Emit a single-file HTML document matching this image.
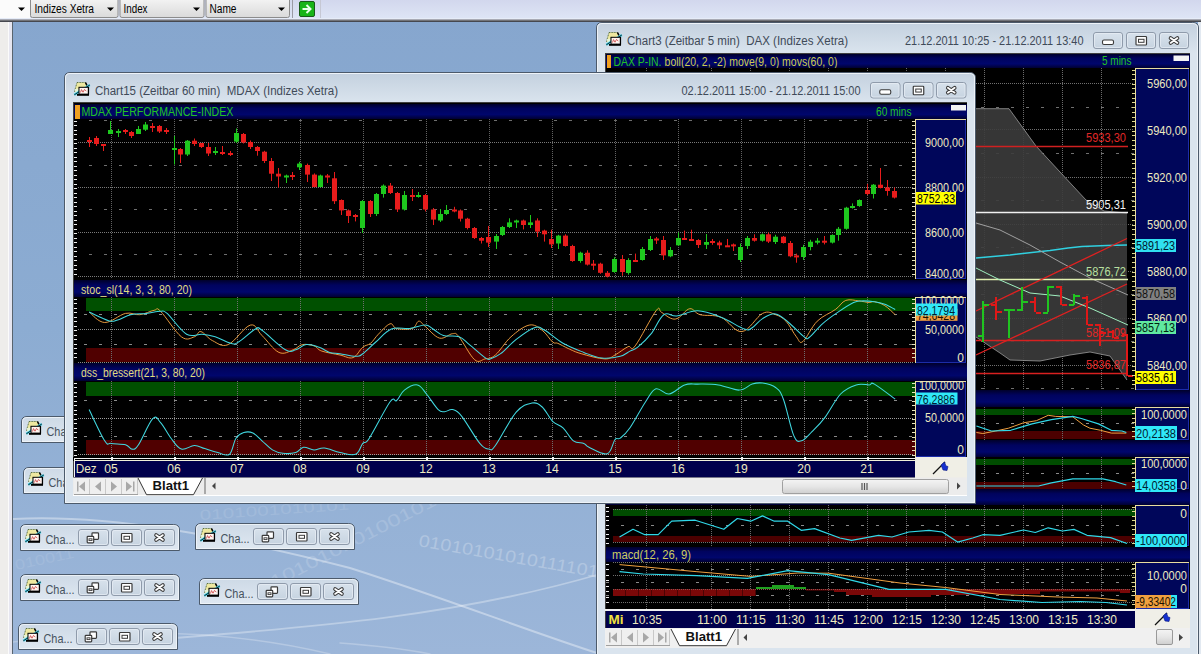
<!DOCTYPE html>
<html><head><meta charset="utf-8"><title>Chart</title>
<style>
html,body{margin:0;padding:0;width:1201px;height:654px;overflow:hidden;background:#8aa9cf;font-family:"Liberation Sans",sans-serif;}
svg text{font-family:"Liberation Sans",sans-serif;}
</style></head><body>
<svg width="1201" height="654" viewBox="0 0 1201 654" style="position:absolute;left:0;top:0"><defs>
<linearGradient id="desk" x1="0" y1="0" x2="0" y2="1">
 <stop offset="0" stop-color="#86a6ce"/><stop offset="0.5" stop-color="#8cacd2"/><stop offset="1" stop-color="#9cb6d9"/>
</linearGradient>
<linearGradient id="frameg" x1="0" y1="0" x2="0" y2="1">
 <stop offset="0" stop-color="#c4d1df"/><stop offset="0.06" stop-color="#cdd9e6"/><stop offset="0.3" stop-color="#d9e3ee"/><stop offset="1" stop-color="#dde7f1"/>
</linearGradient>
<linearGradient id="minig" x1="0" y1="0" x2="0" y2="1">
 <stop offset="0" stop-color="#cdd9e6"/><stop offset="1" stop-color="#dfe8f1"/>
</linearGradient>
<linearGradient id="btng" x1="0" y1="0" x2="0" y2="1">
 <stop offset="0" stop-color="#d8e2ec"/><stop offset="1" stop-color="#c6d3e0"/>
</linearGradient>
<linearGradient id="combog" x1="0" y1="0" x2="0" y2="1">
 <stop offset="0" stop-color="#f6f6f6"/><stop offset="1" stop-color="#dadada"/>
</linearGradient>
<linearGradient id="tbg" x1="0" y1="0" x2="0" y2="1">
 <stop offset="0" stop-color="#d2d7ed"/><stop offset="1" stop-color="#dfe6f6"/>
</linearGradient>
<linearGradient id="navyg" x1="0" y1="0" x2="0" y2="1">
 <stop offset="0" stop-color="#00002a"/><stop offset="0.3" stop-color="#00035e"/><stop offset="0.7" stop-color="#00066c"/><stop offset="1" stop-color="#000032"/>
</linearGradient>
<linearGradient id="scrollg" x1="0" y1="0" x2="0" y2="1">
 <stop offset="0" stop-color="#f4f4f4"/><stop offset="0.5" stop-color="#e6e6e6"/><stop offset="1" stop-color="#cfcfcf"/>
</linearGradient>
</defs><rect x="0" y="0" width="1201" height="654" fill="url(#desk)" /><g fill="none" stroke="#ffffff" stroke-linecap="round"><path d="M13,519 C110,514 220,535 350,568 C450,600 520,628 600,654" stroke-width="2" opacity="0.38"/><path d="M150,640 C300,628 450,618 600,574" stroke-width="1.8" opacity="0.32"/><path d="M13,642 C120,628 230,630 330,654" stroke-width="1.5" opacity="0.25"/><path d="M340,643 C380,646 410,650 430,654" stroke-width="1.5" opacity="0.25"/></g><g font-family="Liberation Sans" fill="#ffffff"><text x="418" y="546" font-size="17" opacity="0.24" transform="rotate(10 418 546)" textLength="182" lengthAdjust="spacingAndGlyphs">01010101010111101</text><text x="262" y="594" font-size="17" opacity="0.15" transform="rotate(-27 262 594)" textLength="210" lengthAdjust="spacingAndGlyphs">0101010101001010</text><text x="200" y="520" font-size="14" opacity="0.1" transform="rotate(-4 200 520)" textLength="150" lengthAdjust="spacingAndGlyphs">0101001010101</text><text x="16" y="570" font-size="14" opacity="0.09" transform="rotate(-12 16 570)" textLength="60" lengthAdjust="spacingAndGlyphs">010011</text></g><rect x="0" y="0" width="1201" height="20" fill="url(#tbg)" /><rect x="0" y="0" width="30" height="20" fill="#fbfbfb" /><rect x="30.5" y="-3" width="87.5" height="20.5" rx="2" fill="url(#combog)" stroke="#8c8c8c" stroke-width="1"/><text xml:space="preserve" x="34.5" y="12.8" font-size="12" fill="#000" text-anchor="start" font-weight="normal" font-family="Liberation Sans" textLength="59.5" lengthAdjust="spacingAndGlyphs" >Indizes Xetra</text><rect x="120" y="-3" width="84" height="20.5" rx="2" fill="url(#combog)" stroke="#8c8c8c" stroke-width="1"/><text xml:space="preserve" x="123.5" y="12.8" font-size="12" fill="#000" text-anchor="start" font-weight="normal" font-family="Liberation Sans" textLength="24" lengthAdjust="spacingAndGlyphs" >Index</text><rect x="206" y="-3" width="83.5" height="20.5" rx="2" fill="url(#combog)" stroke="#8c8c8c" stroke-width="1"/><text xml:space="preserve" x="209.5" y="12.8" font-size="12" fill="#000" text-anchor="start" font-weight="normal" font-family="Liberation Sans" textLength="27" lengthAdjust="spacingAndGlyphs" >Name</text><path d="M18,7.5 L25,7.5 L21.5,11 Z" fill="#000"/><path d="M107,7.5 L114,7.5 L110.5,11 Z" fill="#000"/><path d="M193,7.5 L200,7.5 L196.5,11 Z" fill="#000"/><path d="M278,7.5 L285,7.5 L281.5,11 Z" fill="#000"/><line x1="292.5" y1="0" x2="292.5" y2="19" stroke="#9a9aa4" stroke-width="1" /><rect x="299.5" y="1.5" width="15" height="15" rx="1.5" fill="#18b418" stroke="#1a5a1a" stroke-width="1"/><path d="M302.5,9 L310,9 M306.5,5 L310.5,9 L306.5,13" fill="none" stroke="#eaffea" stroke-width="2"/><line x1="320.5" y1="0" x2="320.5" y2="19" stroke="#c6c8d4" stroke-width="1" /><rect x="0" y="18" width="1201" height="1" fill="#e6ecf8" /><rect x="0" y="19" width="1201" height="1" fill="#a9abb5" /><rect x="0" y="20" width="1201" height="1" fill="#727479" /><rect x="0" y="21" width="1201" height="1" fill="#46484f" /><rect x="0" y="22" width="12" height="632" fill="#eeedeb" /><rect x="8" y="22" width="1" height="632" fill="#fbfbfb" /><rect x="9" y="22" width="3" height="632" fill="#e6e6f0" /><rect x="12" y="22" width="1" height="632" fill="#58646e" /><path d="M21.5,442.5 L21.5,422 Q21.5,416.5 27,416.5 L174.5,416.5 Q180.5,416.5 180.5,422 L180.5,442.5 Z" fill="url(#minig)" stroke="#4c5a6b" stroke-width="1"/><path d="M22.5,441.5 L22.5,422 Q22.5,417.5 27,417.5 L174.5,417.5 Q179.5,417.5 179.5,422 L179.5,441.5 Z" fill="none" stroke="#f2f6fa" stroke-width="1" opacity="0.8"/><g transform="translate(26,421)"><path d="M3,0.5 L11.5,0.5 L13,3.5 L12.5,5.5 L5,5.5 L5,9 L0.5,9.5 Z" fill="#eee8a0" stroke="#3f5a2a" stroke-width="0.8" stroke-dasharray="1 0.6"/><path d="M11.5,0.5 L13,3.5" stroke="#000" stroke-width="1.6"/><path d="M1,7 L4.5,6.5 L4.5,11 L1.5,11.5 Z" fill="#e8f4d8"/><line x1="0.3" y1="12.8" x2="15.8" y2="3" stroke="#40d0e8" stroke-width="2.2"/><line x1="0.3" y1="12.8" x2="15.8" y2="3" stroke="#0a1a20" stroke-width="0.9"/><rect x="5" y="5.3" width="9.6" height="6.8" fill="#fff6f2" stroke="#000" stroke-width="1"/><rect x="13.8" y="5.5" width="1.2" height="7" fill="#000"/><rect x="3" y="12" width="12" height="1.8" fill="#000"/><path d="M6.5,10.5 L7.5,7.6 L9,10.2 L10.5,7.4 L12.3,9.2" fill="none" stroke="#d05050" stroke-width="0.9"/></g><text xml:space="preserve" x="46.5" y="435.5" font-size="12.5" fill="#46525e" text-anchor="start" font-weight="normal" font-family="Liberation Sans" textLength="29" lengthAdjust="spacingAndGlyphs" >Cha...</text><rect x="79.5" y="421.5" width="30" height="16" rx="2.5" fill="url(#btng)" stroke="#8f9bab" stroke-width="1"/><rect x="80.5" y="422.5" width="28" height="14" rx="2" fill="none" stroke="#e8eef5" stroke-width="1" opacity="0.7"/><rect x="93.0" y="424.8" width="6.5" height="6.5" rx="0.8" fill="#fff" stroke="#3a3a3a" stroke-width="1.2"/><rect x="88.2" y="428.3" width="6.5" height="6.5" rx="0.8" fill="#fff" stroke="#3a3a3a" stroke-width="1.2"/><rect x="90.0" y="430.8" width="3" height="1.8" fill="#fff" stroke="#3a3a3a" stroke-width="0.9"/><rect x="112.5" y="421.5" width="30" height="16" rx="2.5" fill="url(#btng)" stroke="#8f9bab" stroke-width="1"/><rect x="113.5" y="422.5" width="28" height="14" rx="2" fill="none" stroke="#e8eef5" stroke-width="1" opacity="0.7"/><rect x="122.5" y="425.5" width="10.5" height="8.5" rx="0.8" fill="#fff" stroke="#3a3a3a" stroke-width="1.2"/><rect x="125.0" y="428.3" width="5.5" height="3" fill="#fff" stroke="#3a3a3a" stroke-width="1"/><rect x="145.5" y="421.5" width="30" height="16" rx="2.5" fill="url(#btng)" stroke="#8f9bab" stroke-width="1"/><rect x="146.5" y="422.5" width="28" height="14" rx="2" fill="none" stroke="#e8eef5" stroke-width="1" opacity="0.7"/><path d="M157.1,427.1 L163.9,431.9 M163.9,427.1 L157.1,431.9" stroke="#3a3a3a" stroke-width="3.8" stroke-linecap="round"/><path d="M157.1,427.1 L163.9,431.9 M163.9,427.1 L157.1,431.9" stroke="#fff" stroke-width="1.8" stroke-linecap="round"/><path d="M23.5,493.5 L23.5,473 Q23.5,467.5 29,467.5 L176.5,467.5 Q182.5,467.5 182.5,473 L182.5,493.5 Z" fill="url(#minig)" stroke="#4c5a6b" stroke-width="1"/><path d="M24.5,492.5 L24.5,473 Q24.5,468.5 29,468.5 L176.5,468.5 Q181.5,468.5 181.5,473 L181.5,492.5 Z" fill="none" stroke="#f2f6fa" stroke-width="1" opacity="0.8"/><g transform="translate(28,472)"><path d="M3,0.5 L11.5,0.5 L13,3.5 L12.5,5.5 L5,5.5 L5,9 L0.5,9.5 Z" fill="#eee8a0" stroke="#3f5a2a" stroke-width="0.8" stroke-dasharray="1 0.6"/><path d="M11.5,0.5 L13,3.5" stroke="#000" stroke-width="1.6"/><path d="M1,7 L4.5,6.5 L4.5,11 L1.5,11.5 Z" fill="#e8f4d8"/><line x1="0.3" y1="12.8" x2="15.8" y2="3" stroke="#40d0e8" stroke-width="2.2"/><line x1="0.3" y1="12.8" x2="15.8" y2="3" stroke="#0a1a20" stroke-width="0.9"/><rect x="5" y="5.3" width="9.6" height="6.8" fill="#fff6f2" stroke="#000" stroke-width="1"/><rect x="13.8" y="5.5" width="1.2" height="7" fill="#000"/><rect x="3" y="12" width="12" height="1.8" fill="#000"/><path d="M6.5,10.5 L7.5,7.6 L9,10.2 L10.5,7.4 L12.3,9.2" fill="none" stroke="#d05050" stroke-width="0.9"/></g><text xml:space="preserve" x="48.5" y="486.5" font-size="12.5" fill="#46525e" text-anchor="start" font-weight="normal" font-family="Liberation Sans" textLength="29" lengthAdjust="spacingAndGlyphs" >Cha...</text><rect x="81.5" y="472.5" width="30" height="16" rx="2.5" fill="url(#btng)" stroke="#8f9bab" stroke-width="1"/><rect x="82.5" y="473.5" width="28" height="14" rx="2" fill="none" stroke="#e8eef5" stroke-width="1" opacity="0.7"/><rect x="95.0" y="475.8" width="6.5" height="6.5" rx="0.8" fill="#fff" stroke="#3a3a3a" stroke-width="1.2"/><rect x="90.2" y="479.3" width="6.5" height="6.5" rx="0.8" fill="#fff" stroke="#3a3a3a" stroke-width="1.2"/><rect x="92.0" y="481.8" width="3" height="1.8" fill="#fff" stroke="#3a3a3a" stroke-width="0.9"/><rect x="114.5" y="472.5" width="30" height="16" rx="2.5" fill="url(#btng)" stroke="#8f9bab" stroke-width="1"/><rect x="115.5" y="473.5" width="28" height="14" rx="2" fill="none" stroke="#e8eef5" stroke-width="1" opacity="0.7"/><rect x="124.5" y="476.5" width="10.5" height="8.5" rx="0.8" fill="#fff" stroke="#3a3a3a" stroke-width="1.2"/><rect x="127.0" y="479.3" width="5.5" height="3" fill="#fff" stroke="#3a3a3a" stroke-width="1"/><rect x="147.5" y="472.5" width="30" height="16" rx="2.5" fill="url(#btng)" stroke="#8f9bab" stroke-width="1"/><rect x="148.5" y="473.5" width="28" height="14" rx="2" fill="none" stroke="#e8eef5" stroke-width="1" opacity="0.7"/><path d="M159.1,478.1 L165.9,482.9 M165.9,478.1 L159.1,482.9" stroke="#3a3a3a" stroke-width="3.8" stroke-linecap="round"/><path d="M159.1,478.1 L165.9,482.9 M165.9,478.1 L159.1,482.9" stroke="#fff" stroke-width="1.8" stroke-linecap="round"/><path d="M20.5,550.5 L20.5,530 Q20.5,524.5 26,524.5 L173.5,524.5 Q179.5,524.5 179.5,530 L179.5,550.5 Z" fill="url(#minig)" stroke="#4c5a6b" stroke-width="1"/><path d="M21.5,549.5 L21.5,530 Q21.5,525.5 26,525.5 L173.5,525.5 Q178.5,525.5 178.5,530 L178.5,549.5 Z" fill="none" stroke="#f2f6fa" stroke-width="1" opacity="0.8"/><g transform="translate(25,529)"><path d="M3,0.5 L11.5,0.5 L13,3.5 L12.5,5.5 L5,5.5 L5,9 L0.5,9.5 Z" fill="#eee8a0" stroke="#3f5a2a" stroke-width="0.8" stroke-dasharray="1 0.6"/><path d="M11.5,0.5 L13,3.5" stroke="#000" stroke-width="1.6"/><path d="M1,7 L4.5,6.5 L4.5,11 L1.5,11.5 Z" fill="#e8f4d8"/><line x1="0.3" y1="12.8" x2="15.8" y2="3" stroke="#40d0e8" stroke-width="2.2"/><line x1="0.3" y1="12.8" x2="15.8" y2="3" stroke="#0a1a20" stroke-width="0.9"/><rect x="5" y="5.3" width="9.6" height="6.8" fill="#fff6f2" stroke="#000" stroke-width="1"/><rect x="13.8" y="5.5" width="1.2" height="7" fill="#000"/><rect x="3" y="12" width="12" height="1.8" fill="#000"/><path d="M6.5,10.5 L7.5,7.6 L9,10.2 L10.5,7.4 L12.3,9.2" fill="none" stroke="#d05050" stroke-width="0.9"/></g><text xml:space="preserve" x="45.5" y="543.5" font-size="12.5" fill="#46525e" text-anchor="start" font-weight="normal" font-family="Liberation Sans" textLength="29" lengthAdjust="spacingAndGlyphs" >Cha...</text><rect x="78.5" y="529.5" width="30" height="16" rx="2.5" fill="url(#btng)" stroke="#8f9bab" stroke-width="1"/><rect x="79.5" y="530.5" width="28" height="14" rx="2" fill="none" stroke="#e8eef5" stroke-width="1" opacity="0.7"/><rect x="92.0" y="532.8" width="6.5" height="6.5" rx="0.8" fill="#fff" stroke="#3a3a3a" stroke-width="1.2"/><rect x="87.2" y="536.3" width="6.5" height="6.5" rx="0.8" fill="#fff" stroke="#3a3a3a" stroke-width="1.2"/><rect x="89.0" y="538.8" width="3" height="1.8" fill="#fff" stroke="#3a3a3a" stroke-width="0.9"/><rect x="111.5" y="529.5" width="30" height="16" rx="2.5" fill="url(#btng)" stroke="#8f9bab" stroke-width="1"/><rect x="112.5" y="530.5" width="28" height="14" rx="2" fill="none" stroke="#e8eef5" stroke-width="1" opacity="0.7"/><rect x="121.5" y="533.5" width="10.5" height="8.5" rx="0.8" fill="#fff" stroke="#3a3a3a" stroke-width="1.2"/><rect x="124.0" y="536.3" width="5.5" height="3" fill="#fff" stroke="#3a3a3a" stroke-width="1"/><rect x="144.5" y="529.5" width="30" height="16" rx="2.5" fill="url(#btng)" stroke="#8f9bab" stroke-width="1"/><rect x="145.5" y="530.5" width="28" height="14" rx="2" fill="none" stroke="#e8eef5" stroke-width="1" opacity="0.7"/><path d="M156.1,535.1 L162.9,539.9 M162.9,535.1 L156.1,539.9" stroke="#3a3a3a" stroke-width="3.8" stroke-linecap="round"/><path d="M156.1,535.1 L162.9,539.9 M162.9,535.1 L156.1,539.9" stroke="#fff" stroke-width="1.8" stroke-linecap="round"/><path d="M195.5,549.5 L195.5,529 Q195.5,523.5 201,523.5 L348.5,523.5 Q354.5,523.5 354.5,529 L354.5,549.5 Z" fill="url(#minig)" stroke="#4c5a6b" stroke-width="1"/><path d="M196.5,548.5 L196.5,529 Q196.5,524.5 201,524.5 L348.5,524.5 Q353.5,524.5 353.5,529 L353.5,548.5 Z" fill="none" stroke="#f2f6fa" stroke-width="1" opacity="0.8"/><g transform="translate(200,528)"><path d="M3,0.5 L11.5,0.5 L13,3.5 L12.5,5.5 L5,5.5 L5,9 L0.5,9.5 Z" fill="#eee8a0" stroke="#3f5a2a" stroke-width="0.8" stroke-dasharray="1 0.6"/><path d="M11.5,0.5 L13,3.5" stroke="#000" stroke-width="1.6"/><path d="M1,7 L4.5,6.5 L4.5,11 L1.5,11.5 Z" fill="#e8f4d8"/><line x1="0.3" y1="12.8" x2="15.8" y2="3" stroke="#40d0e8" stroke-width="2.2"/><line x1="0.3" y1="12.8" x2="15.8" y2="3" stroke="#0a1a20" stroke-width="0.9"/><rect x="5" y="5.3" width="9.6" height="6.8" fill="#fff6f2" stroke="#000" stroke-width="1"/><rect x="13.8" y="5.5" width="1.2" height="7" fill="#000"/><rect x="3" y="12" width="12" height="1.8" fill="#000"/><path d="M6.5,10.5 L7.5,7.6 L9,10.2 L10.5,7.4 L12.3,9.2" fill="none" stroke="#d05050" stroke-width="0.9"/></g><text xml:space="preserve" x="220.5" y="542.5" font-size="12.5" fill="#46525e" text-anchor="start" font-weight="normal" font-family="Liberation Sans" textLength="29" lengthAdjust="spacingAndGlyphs" >Cha...</text><rect x="253.5" y="528.5" width="30" height="16" rx="2.5" fill="url(#btng)" stroke="#8f9bab" stroke-width="1"/><rect x="254.5" y="529.5" width="28" height="14" rx="2" fill="none" stroke="#e8eef5" stroke-width="1" opacity="0.7"/><rect x="267.0" y="531.8" width="6.5" height="6.5" rx="0.8" fill="#fff" stroke="#3a3a3a" stroke-width="1.2"/><rect x="262.2" y="535.3" width="6.5" height="6.5" rx="0.8" fill="#fff" stroke="#3a3a3a" stroke-width="1.2"/><rect x="264.0" y="537.8" width="3" height="1.8" fill="#fff" stroke="#3a3a3a" stroke-width="0.9"/><rect x="286.5" y="528.5" width="30" height="16" rx="2.5" fill="url(#btng)" stroke="#8f9bab" stroke-width="1"/><rect x="287.5" y="529.5" width="28" height="14" rx="2" fill="none" stroke="#e8eef5" stroke-width="1" opacity="0.7"/><rect x="296.5" y="532.5" width="10.5" height="8.5" rx="0.8" fill="#fff" stroke="#3a3a3a" stroke-width="1.2"/><rect x="299.0" y="535.3" width="5.5" height="3" fill="#fff" stroke="#3a3a3a" stroke-width="1"/><rect x="319.5" y="528.5" width="30" height="16" rx="2.5" fill="url(#btng)" stroke="#8f9bab" stroke-width="1"/><rect x="320.5" y="529.5" width="28" height="14" rx="2" fill="none" stroke="#e8eef5" stroke-width="1" opacity="0.7"/><path d="M331.1,534.1 L337.9,538.9 M337.9,534.1 L331.1,538.9" stroke="#3a3a3a" stroke-width="3.8" stroke-linecap="round"/><path d="M331.1,534.1 L337.9,538.9 M337.9,534.1 L331.1,538.9" stroke="#fff" stroke-width="1.8" stroke-linecap="round"/><path d="M20.5,600.5 L20.5,580 Q20.5,574.5 26,574.5 L173.5,574.5 Q179.5,574.5 179.5,580 L179.5,600.5 Z" fill="url(#minig)" stroke="#4c5a6b" stroke-width="1"/><path d="M21.5,599.5 L21.5,580 Q21.5,575.5 26,575.5 L173.5,575.5 Q178.5,575.5 178.5,580 L178.5,599.5 Z" fill="none" stroke="#f2f6fa" stroke-width="1" opacity="0.8"/><g transform="translate(25,579)"><path d="M3,0.5 L11.5,0.5 L13,3.5 L12.5,5.5 L5,5.5 L5,9 L0.5,9.5 Z" fill="#eee8a0" stroke="#3f5a2a" stroke-width="0.8" stroke-dasharray="1 0.6"/><path d="M11.5,0.5 L13,3.5" stroke="#000" stroke-width="1.6"/><path d="M1,7 L4.5,6.5 L4.5,11 L1.5,11.5 Z" fill="#e8f4d8"/><line x1="0.3" y1="12.8" x2="15.8" y2="3" stroke="#40d0e8" stroke-width="2.2"/><line x1="0.3" y1="12.8" x2="15.8" y2="3" stroke="#0a1a20" stroke-width="0.9"/><rect x="5" y="5.3" width="9.6" height="6.8" fill="#fff6f2" stroke="#000" stroke-width="1"/><rect x="13.8" y="5.5" width="1.2" height="7" fill="#000"/><rect x="3" y="12" width="12" height="1.8" fill="#000"/><path d="M6.5,10.5 L7.5,7.6 L9,10.2 L10.5,7.4 L12.3,9.2" fill="none" stroke="#d05050" stroke-width="0.9"/></g><text xml:space="preserve" x="45.5" y="593.5" font-size="12.5" fill="#46525e" text-anchor="start" font-weight="normal" font-family="Liberation Sans" textLength="29" lengthAdjust="spacingAndGlyphs" >Cha...</text><rect x="78.5" y="579.5" width="30" height="16" rx="2.5" fill="url(#btng)" stroke="#8f9bab" stroke-width="1"/><rect x="79.5" y="580.5" width="28" height="14" rx="2" fill="none" stroke="#e8eef5" stroke-width="1" opacity="0.7"/><rect x="92.0" y="582.8" width="6.5" height="6.5" rx="0.8" fill="#fff" stroke="#3a3a3a" stroke-width="1.2"/><rect x="87.2" y="586.3" width="6.5" height="6.5" rx="0.8" fill="#fff" stroke="#3a3a3a" stroke-width="1.2"/><rect x="89.0" y="588.8" width="3" height="1.8" fill="#fff" stroke="#3a3a3a" stroke-width="0.9"/><rect x="111.5" y="579.5" width="30" height="16" rx="2.5" fill="url(#btng)" stroke="#8f9bab" stroke-width="1"/><rect x="112.5" y="580.5" width="28" height="14" rx="2" fill="none" stroke="#e8eef5" stroke-width="1" opacity="0.7"/><rect x="121.5" y="583.5" width="10.5" height="8.5" rx="0.8" fill="#fff" stroke="#3a3a3a" stroke-width="1.2"/><rect x="124.0" y="586.3" width="5.5" height="3" fill="#fff" stroke="#3a3a3a" stroke-width="1"/><rect x="144.5" y="579.5" width="30" height="16" rx="2.5" fill="url(#btng)" stroke="#8f9bab" stroke-width="1"/><rect x="145.5" y="580.5" width="28" height="14" rx="2" fill="none" stroke="#e8eef5" stroke-width="1" opacity="0.7"/><path d="M156.1,585.1 L162.9,589.9 M162.9,585.1 L156.1,589.9" stroke="#3a3a3a" stroke-width="3.8" stroke-linecap="round"/><path d="M156.1,585.1 L162.9,589.9 M162.9,585.1 L156.1,589.9" stroke="#fff" stroke-width="1.8" stroke-linecap="round"/><path d="M199.5,604.5 L199.5,584 Q199.5,578.5 205,578.5 L352.5,578.5 Q358.5,578.5 358.5,584 L358.5,604.5 Z" fill="url(#minig)" stroke="#4c5a6b" stroke-width="1"/><path d="M200.5,603.5 L200.5,584 Q200.5,579.5 205,579.5 L352.5,579.5 Q357.5,579.5 357.5,584 L357.5,603.5 Z" fill="none" stroke="#f2f6fa" stroke-width="1" opacity="0.8"/><g transform="translate(204,583)"><path d="M3,0.5 L11.5,0.5 L13,3.5 L12.5,5.5 L5,5.5 L5,9 L0.5,9.5 Z" fill="#eee8a0" stroke="#3f5a2a" stroke-width="0.8" stroke-dasharray="1 0.6"/><path d="M11.5,0.5 L13,3.5" stroke="#000" stroke-width="1.6"/><path d="M1,7 L4.5,6.5 L4.5,11 L1.5,11.5 Z" fill="#e8f4d8"/><line x1="0.3" y1="12.8" x2="15.8" y2="3" stroke="#40d0e8" stroke-width="2.2"/><line x1="0.3" y1="12.8" x2="15.8" y2="3" stroke="#0a1a20" stroke-width="0.9"/><rect x="5" y="5.3" width="9.6" height="6.8" fill="#fff6f2" stroke="#000" stroke-width="1"/><rect x="13.8" y="5.5" width="1.2" height="7" fill="#000"/><rect x="3" y="12" width="12" height="1.8" fill="#000"/><path d="M6.5,10.5 L7.5,7.6 L9,10.2 L10.5,7.4 L12.3,9.2" fill="none" stroke="#d05050" stroke-width="0.9"/></g><text xml:space="preserve" x="224.5" y="597.5" font-size="12.5" fill="#46525e" text-anchor="start" font-weight="normal" font-family="Liberation Sans" textLength="29" lengthAdjust="spacingAndGlyphs" >Cha...</text><rect x="257.5" y="583.5" width="30" height="16" rx="2.5" fill="url(#btng)" stroke="#8f9bab" stroke-width="1"/><rect x="258.5" y="584.5" width="28" height="14" rx="2" fill="none" stroke="#e8eef5" stroke-width="1" opacity="0.7"/><rect x="271.0" y="586.8" width="6.5" height="6.5" rx="0.8" fill="#fff" stroke="#3a3a3a" stroke-width="1.2"/><rect x="266.2" y="590.3" width="6.5" height="6.5" rx="0.8" fill="#fff" stroke="#3a3a3a" stroke-width="1.2"/><rect x="268.0" y="592.8" width="3" height="1.8" fill="#fff" stroke="#3a3a3a" stroke-width="0.9"/><rect x="290.5" y="583.5" width="30" height="16" rx="2.5" fill="url(#btng)" stroke="#8f9bab" stroke-width="1"/><rect x="291.5" y="584.5" width="28" height="14" rx="2" fill="none" stroke="#e8eef5" stroke-width="1" opacity="0.7"/><rect x="300.5" y="587.5" width="10.5" height="8.5" rx="0.8" fill="#fff" stroke="#3a3a3a" stroke-width="1.2"/><rect x="303.0" y="590.3" width="5.5" height="3" fill="#fff" stroke="#3a3a3a" stroke-width="1"/><rect x="323.5" y="583.5" width="30" height="16" rx="2.5" fill="url(#btng)" stroke="#8f9bab" stroke-width="1"/><rect x="324.5" y="584.5" width="28" height="14" rx="2" fill="none" stroke="#e8eef5" stroke-width="1" opacity="0.7"/><path d="M335.1,589.1 L341.9,593.9 M341.9,589.1 L335.1,593.9" stroke="#3a3a3a" stroke-width="3.8" stroke-linecap="round"/><path d="M335.1,589.1 L341.9,593.9 M341.9,589.1 L335.1,593.9" stroke="#fff" stroke-width="1.8" stroke-linecap="round"/><path d="M18.5,649.5 L18.5,629 Q18.5,623.5 24,623.5 L171.5,623.5 Q177.5,623.5 177.5,629 L177.5,649.5 Z" fill="url(#minig)" stroke="#4c5a6b" stroke-width="1"/><path d="M19.5,648.5 L19.5,629 Q19.5,624.5 24,624.5 L171.5,624.5 Q176.5,624.5 176.5,629 L176.5,648.5 Z" fill="none" stroke="#f2f6fa" stroke-width="1" opacity="0.8"/><g transform="translate(23,628)"><path d="M3,0.5 L11.5,0.5 L13,3.5 L12.5,5.5 L5,5.5 L5,9 L0.5,9.5 Z" fill="#eee8a0" stroke="#3f5a2a" stroke-width="0.8" stroke-dasharray="1 0.6"/><path d="M11.5,0.5 L13,3.5" stroke="#000" stroke-width="1.6"/><path d="M1,7 L4.5,6.5 L4.5,11 L1.5,11.5 Z" fill="#e8f4d8"/><line x1="0.3" y1="12.8" x2="15.8" y2="3" stroke="#40d0e8" stroke-width="2.2"/><line x1="0.3" y1="12.8" x2="15.8" y2="3" stroke="#0a1a20" stroke-width="0.9"/><rect x="5" y="5.3" width="9.6" height="6.8" fill="#fff6f2" stroke="#000" stroke-width="1"/><rect x="13.8" y="5.5" width="1.2" height="7" fill="#000"/><rect x="3" y="12" width="12" height="1.8" fill="#000"/><path d="M6.5,10.5 L7.5,7.6 L9,10.2 L10.5,7.4 L12.3,9.2" fill="none" stroke="#d05050" stroke-width="0.9"/></g><text xml:space="preserve" x="43.5" y="642.5" font-size="12.5" fill="#46525e" text-anchor="start" font-weight="normal" font-family="Liberation Sans" textLength="29" lengthAdjust="spacingAndGlyphs" >Cha...</text><rect x="76.5" y="628.5" width="30" height="16" rx="2.5" fill="url(#btng)" stroke="#8f9bab" stroke-width="1"/><rect x="77.5" y="629.5" width="28" height="14" rx="2" fill="none" stroke="#e8eef5" stroke-width="1" opacity="0.7"/><rect x="90.0" y="631.8" width="6.5" height="6.5" rx="0.8" fill="#fff" stroke="#3a3a3a" stroke-width="1.2"/><rect x="85.2" y="635.3" width="6.5" height="6.5" rx="0.8" fill="#fff" stroke="#3a3a3a" stroke-width="1.2"/><rect x="87.0" y="637.8" width="3" height="1.8" fill="#fff" stroke="#3a3a3a" stroke-width="0.9"/><rect x="109.5" y="628.5" width="30" height="16" rx="2.5" fill="url(#btng)" stroke="#8f9bab" stroke-width="1"/><rect x="110.5" y="629.5" width="28" height="14" rx="2" fill="none" stroke="#e8eef5" stroke-width="1" opacity="0.7"/><rect x="119.5" y="632.5" width="10.5" height="8.5" rx="0.8" fill="#fff" stroke="#3a3a3a" stroke-width="1.2"/><rect x="122.0" y="635.3" width="5.5" height="3" fill="#fff" stroke="#3a3a3a" stroke-width="1"/><rect x="142.5" y="628.5" width="30" height="16" rx="2.5" fill="url(#btng)" stroke="#8f9bab" stroke-width="1"/><rect x="143.5" y="629.5" width="28" height="14" rx="2" fill="none" stroke="#e8eef5" stroke-width="1" opacity="0.7"/><path d="M154.1,634.1 L160.9,638.9 M160.9,634.1 L154.1,638.9" stroke="#3a3a3a" stroke-width="3.8" stroke-linecap="round"/><path d="M154.1,634.1 L160.9,638.9 M160.9,634.1 L154.1,638.9" stroke="#fff" stroke-width="1.8" stroke-linecap="round"/><rect x="1198" y="22" width="3" height="632" fill="#e2e9f1" /><defs><linearGradient id="fg596_22" gradientUnits="userSpaceOnUse" x1="0" y1="22" x2="0" y2="53"><stop offset="0" stop-color="#c3d0de"/><stop offset="1" stop-color="#dae4ee"/></linearGradient></defs><path d="M596.5,681.5 L596.5,28 Q596.5,22.5 602,22.5 L1192.5,22.5 Q1198.5,22.5 1198.5,28 L1198.5,681.5 Z" fill="url(#fg596_22)" stroke="#4c5a6b" stroke-width="1"/><path d="M597.5,680.5 L597.5,28 Q597.5,23.5 602,23.5 L1192.5,23.5 Q1197.5,23.5 1197.5,28 L1197.5,680.5 Z" fill="none" stroke="#eef3f8" stroke-width="1"/><g transform="translate(606,32)"><path d="M3,0.5 L11.5,0.5 L13,3.5 L12.5,5.5 L5,5.5 L5,9 L0.5,9.5 Z" fill="#eee8a0" stroke="#3f5a2a" stroke-width="0.8" stroke-dasharray="1 0.6"/><path d="M11.5,0.5 L13,3.5" stroke="#000" stroke-width="1.6"/><path d="M1,7 L4.5,6.5 L4.5,11 L1.5,11.5 Z" fill="#e8f4d8"/><line x1="0.3" y1="12.8" x2="15.8" y2="3" stroke="#40d0e8" stroke-width="2.2"/><line x1="0.3" y1="12.8" x2="15.8" y2="3" stroke="#0a1a20" stroke-width="0.9"/><rect x="5" y="5.3" width="9.6" height="6.8" fill="#fff6f2" stroke="#000" stroke-width="1"/><rect x="13.8" y="5.5" width="1.2" height="7" fill="#000"/><rect x="3" y="12" width="12" height="1.8" fill="#000"/><path d="M6.5,10.5 L7.5,7.6 L9,10.2 L10.5,7.4 L12.3,9.2" fill="none" stroke="#d05050" stroke-width="0.9"/></g><text xml:space="preserve" x="627" y="44.7" font-size="12.5" fill="#404a58" text-anchor="start" font-weight="normal" font-family="Liberation Sans" textLength="221" lengthAdjust="spacingAndGlyphs" >Chart3 (Zeitbar 5 min)  DAX (Indizes Xetra)</text><text xml:space="preserve" x="905" y="44.7" font-size="12.5" fill="#404a58" text-anchor="start" font-weight="normal" font-family="Liberation Sans" textLength="178.5" lengthAdjust="spacingAndGlyphs" >21.12.2011 10:25 - 21.12.2011 13:40</text><rect x="1093.5" y="32.5" width="29" height="16" rx="2.5" fill="url(#btng)" stroke="#8f9bab" stroke-width="1"/><rect x="1094.5" y="33.5" width="27" height="14" rx="2" fill="none" stroke="#e8eef5" stroke-width="1" opacity="0.7"/><rect x="1102.5" y="40.0" width="11" height="4.5" rx="1.5" fill="#fff" stroke="#3a3a3a" stroke-width="1.1"/><rect x="1126.5" y="32.5" width="29" height="16" rx="2.5" fill="url(#btng)" stroke="#8f9bab" stroke-width="1"/><rect x="1127.5" y="33.5" width="27" height="14" rx="2" fill="none" stroke="#e8eef5" stroke-width="1" opacity="0.7"/><rect x="1136.0" y="36.5" width="10.5" height="8.5" rx="0.8" fill="#fff" stroke="#3a3a3a" stroke-width="1.2"/><rect x="1138.5" y="39.3" width="5.5" height="3" fill="#fff" stroke="#3a3a3a" stroke-width="1"/><rect x="1159.5" y="32.5" width="29" height="16" rx="2.5" fill="url(#btng)" stroke="#8f9bab" stroke-width="1"/><rect x="1160.5" y="33.5" width="27" height="14" rx="2" fill="none" stroke="#e8eef5" stroke-width="1" opacity="0.7"/><path d="M1170.6,38.1 L1177.4,42.9 M1177.4,38.1 L1170.6,42.9" stroke="#3a3a3a" stroke-width="3.8" stroke-linecap="round"/><path d="M1170.6,38.1 L1177.4,42.9 M1177.4,38.1 L1170.6,42.9" stroke="#fff" stroke-width="1.8" stroke-linecap="round"/><rect x="605" y="53" width="585" height="595" fill="#000000" /><rect x="605" y="53" width="585" height="1" fill="#404040" /><rect x="605" y="53" width="1" height="575" fill="#404040" /><rect x="606" y="54" width="584" height="14" fill="url(#navyg)" /><rect x="607" y="55" width="4" height="13" fill="#f0a020" /><text xml:space="preserve" x="613.5" y="65.6" font-size="12" fill="#22c422" text-anchor="start" font-weight="normal" font-family="Liberation Sans" textLength="48" lengthAdjust="spacingAndGlyphs" >DAX P-IN.</text><text xml:space="preserve" x="664.6" y="65.6" font-size="12" fill="#cccc50" text-anchor="start" font-weight="normal" font-family="Liberation Sans" textLength="172.8" lengthAdjust="spacingAndGlyphs" >boll(20, 2, -2) move(9, 0) movs(60, 0)</text><text xml:space="preserve" x="1102" y="65.4" font-size="12" fill="#22c422" text-anchor="start" font-weight="normal" font-family="Liberation Sans" textLength="29.4" lengthAdjust="spacingAndGlyphs" >5 mins</text><rect x="1173.5" y="55.5" width="15.5" height="5.5" fill="#f4f4f4" /><rect x="606" y="68" width="529" height="322" fill="#000" /><line x1="606" y1="83.5" x2="1134" y2="83.5" stroke="#707070" stroke-width="1" stroke-dasharray="1 1"/><line x1="606" y1="129.5" x2="1134" y2="129.5" stroke="#707070" stroke-width="1" stroke-dasharray="1 1"/><line x1="606" y1="177.5" x2="1134" y2="177.5" stroke="#707070" stroke-width="1" stroke-dasharray="1 1"/><line x1="606" y1="224.5" x2="1134" y2="224.5" stroke="#707070" stroke-width="1" stroke-dasharray="1 1"/><line x1="606" y1="271.5" x2="1134" y2="271.5" stroke="#707070" stroke-width="1" stroke-dasharray="1 1"/><line x1="606" y1="318.5" x2="1134" y2="318.5" stroke="#707070" stroke-width="1" stroke-dasharray="1 1"/><line x1="606" y1="365.5" x2="1134" y2="365.5" stroke="#707070" stroke-width="1" stroke-dasharray="1 1"/><line x1="606" y1="107.5" x2="1134" y2="107.5" stroke="#707070" stroke-width="1" stroke-dasharray="3 12" stroke-dashoffset="0"/><line x1="606" y1="153.5" x2="1134" y2="153.5" stroke="#707070" stroke-width="1" stroke-dasharray="3 12" stroke-dashoffset="0"/><line x1="606" y1="200.5" x2="1134" y2="200.5" stroke="#707070" stroke-width="1" stroke-dasharray="3 12" stroke-dashoffset="0"/><line x1="606" y1="247.5" x2="1134" y2="247.5" stroke="#707070" stroke-width="1" stroke-dasharray="3 12" stroke-dashoffset="0"/><line x1="606" y1="294.5" x2="1134" y2="294.5" stroke="#707070" stroke-width="1" stroke-dasharray="3 12" stroke-dashoffset="0"/><line x1="606" y1="341.5" x2="1134" y2="341.5" stroke="#707070" stroke-width="1" stroke-dasharray="3 12" stroke-dashoffset="0"/><line x1="606" y1="388.5" x2="1134" y2="388.5" stroke="#707070" stroke-width="1" stroke-dasharray="3 12" stroke-dashoffset="0"/><line x1="646.5" y1="68" x2="646.5" y2="390" stroke="#6a6a6a" stroke-width="1" stroke-dasharray="1 1"/><line x1="711.5" y1="68" x2="711.5" y2="390" stroke="#6a6a6a" stroke-width="1" stroke-dasharray="1 1"/><line x1="750.5" y1="68" x2="750.5" y2="390" stroke="#6a6a6a" stroke-width="1" stroke-dasharray="1 1"/><line x1="789.5" y1="68" x2="789.5" y2="390" stroke="#6a6a6a" stroke-width="1" stroke-dasharray="1 1"/><line x1="828.5" y1="68" x2="828.5" y2="390" stroke="#6a6a6a" stroke-width="1" stroke-dasharray="1 1"/><line x1="867.5" y1="68" x2="867.5" y2="390" stroke="#6a6a6a" stroke-width="1" stroke-dasharray="1 1"/><line x1="906.5" y1="68" x2="906.5" y2="390" stroke="#6a6a6a" stroke-width="1" stroke-dasharray="1 1"/><line x1="945.5" y1="68" x2="945.5" y2="390" stroke="#6a6a6a" stroke-width="1" stroke-dasharray="1 1"/><line x1="984.5" y1="68" x2="984.5" y2="390" stroke="#6a6a6a" stroke-width="1" stroke-dasharray="1 1"/><line x1="1023.5" y1="68" x2="1023.5" y2="390" stroke="#6a6a6a" stroke-width="1" stroke-dasharray="1 1"/><line x1="1062.5" y1="68" x2="1062.5" y2="390" stroke="#6a6a6a" stroke-width="1" stroke-dasharray="1 1"/><line x1="1101.5" y1="68" x2="1101.5" y2="390" stroke="#6a6a6a" stroke-width="1" stroke-dasharray="1 1"/><path d="M976,108.7 L1009,108.7 L1036,146 L1060,172 L1086,200 L1104,211 L1127,213 L1127,380 L1110,356 L1090,352 L1070,355 L1040,361 L1010,360 L1000,353 L976,337 Z" fill="#3c3c3c" fill-opacity="0.9"/><polyline points="976.0,108.7 1009.0,108.7 1036.0,146.0 1060.0,172.0 1086.0,200.0 1104.0,211.0 1127.0,213.0" fill="none" stroke="#9a9a9a" stroke-width="0.8" stroke-linejoin="round" /><polyline points="976.0,337.0 1000.0,353.0 1010.0,360.0 1040.0,361.0 1070.0,355.0 1090.0,352.0 1110.0,356.0 1127.0,380.0" fill="none" stroke="#9a9a9a" stroke-width="0.8" stroke-linejoin="round" /><line x1="976" y1="146.5" x2="1128" y2="146.5" stroke="#d02020" stroke-width="1.3" /><text xml:space="preserve" x="1126" y="142" font-size="12" fill="#e02828" text-anchor="end" font-weight="normal" font-family="Liberation Sans" textLength="40" lengthAdjust="spacingAndGlyphs" >5933,30</text><line x1="976" y1="212.5" x2="1128" y2="212.5" stroke="#f0f0f0" stroke-width="1.3" /><text xml:space="preserve" x="1126" y="209" font-size="12" fill="#f4f4f4" text-anchor="end" font-weight="normal" font-family="Liberation Sans" textLength="40" lengthAdjust="spacingAndGlyphs" >5905,31</text><polyline points="976.0,258.0 1010.0,255.0 1050.0,250.5 1068.0,248.0 1082.0,246.5 1107.0,245.5 1127.0,245.0" fill="none" stroke="#30d0e0" stroke-width="1.5" stroke-linejoin="round" /><polyline points="976.0,223.0 1000.0,230.0 1030.0,245.0 1060.0,262.0 1090.0,278.0 1128.0,295.0" fill="none" stroke="#a0a0a0" stroke-width="1" stroke-linejoin="round" /><line x1="976" y1="279.5" x2="1128" y2="279.5" stroke="#e0f0b0" stroke-width="1.3" /><text xml:space="preserve" x="1126" y="276" font-size="12" fill="#b8e0a0" text-anchor="end" font-weight="normal" font-family="Liberation Sans" textLength="40" lengthAdjust="spacingAndGlyphs" >5876,72</text><line x1="976" y1="311" x2="1127" y2="238.5" stroke="#e02020" stroke-width="1.3" /><line x1="976" y1="355" x2="1127" y2="284" stroke="#e02020" stroke-width="1.3" /><polyline points="976.0,268.0 1000.0,280.0 1030.0,293.0 1060.0,296.0 1090.0,308.0 1128.0,325.0" fill="none" stroke="#a0f0c0" stroke-width="1" stroke-linejoin="round" /><line x1="976" y1="340.5" x2="1128" y2="340.5" stroke="#d82020" stroke-width="1.3" /><text xml:space="preserve" x="1126" y="337" font-size="12" fill="#e02828" text-anchor="end" font-weight="normal" font-family="Liberation Sans" textLength="40" lengthAdjust="spacingAndGlyphs" >5851,09</text><line x1="976" y1="373.5" x2="1128" y2="373.5" stroke="#d82020" stroke-width="1.3" /><text xml:space="preserve" x="1126" y="369" font-size="12" fill="#e02828" text-anchor="end" font-weight="normal" font-family="Liberation Sans" textLength="40" lengthAdjust="spacingAndGlyphs" >5836,87</text><rect x="982" y="301" width="2" height="41" fill="#20c420" /><rect x="978" y="335" width="5" height="2" fill="#20c420" /><rect x="984" y="304" width="5" height="2" fill="#20c420" /><rect x="995" y="297" width="2" height="23" fill="#e01818" /><rect x="991" y="304" width="5" height="2" fill="#e01818" /><rect x="997" y="311" width="5" height="2" fill="#e01818" /><rect x="1008" y="309" width="2" height="29" fill="#20c420" /><rect x="1004" y="309" width="5" height="2" fill="#20c420" /><rect x="1010" y="309" width="5" height="2" fill="#20c420" /><rect x="1021" y="287" width="2" height="24" fill="#20c420" /><rect x="1017" y="309" width="5" height="2" fill="#20c420" /><rect x="1023" y="301" width="5" height="2" fill="#20c420" /><rect x="1034" y="297" width="2" height="15" fill="#e01818" /><rect x="1030" y="301" width="5" height="2" fill="#e01818" /><rect x="1036" y="312" width="5" height="2" fill="#e01818" /><rect x="1047" y="286" width="2" height="26" fill="#20c420" /><rect x="1043" y="312" width="5" height="2" fill="#20c420" /><rect x="1049" y="286" width="5" height="2" fill="#20c420" /><rect x="1060" y="286" width="2" height="19" fill="#e01818" /><rect x="1056" y="286" width="5" height="2" fill="#e01818" /><rect x="1062" y="304" width="5" height="2" fill="#e01818" /><rect x="1073" y="294" width="2" height="11" fill="#20c420" /><rect x="1069" y="304" width="5" height="2" fill="#20c420" /><rect x="1075" y="295" width="5" height="2" fill="#20c420" /><rect x="1086" y="296" width="2" height="29" fill="#e01818" /><rect x="1082" y="297" width="5" height="2" fill="#e01818" /><rect x="1088" y="324" width="5" height="2" fill="#e01818" /><rect x="1099" y="324" width="2" height="22" fill="#e01818" /><rect x="1095" y="324" width="5" height="2" fill="#e01818" /><rect x="1101" y="332" width="5" height="2" fill="#e01818" /><rect x="1112" y="330" width="2" height="8" fill="#e01818" /><rect x="1108" y="331" width="5" height="2" fill="#e01818" /><rect x="1114" y="337" width="5" height="2" fill="#e01818" /><rect x="1126" y="334" width="2" height="42" fill="#e01818" /><rect x="1122" y="334" width="5" height="2" fill="#e01818" /><rect x="1128" y="375" width="5" height="2" fill="#e01818" /><rect x="1135" y="68" width="54" height="322" fill="#00065a" /><line x1="1188.5" y1="68" x2="1188.5" y2="390" stroke="#1c2ca8" stroke-width="1" /><line x1="1135" y1="389.5" x2="1189" y2="389.5" stroke="#1c2ca8" stroke-width="1" /><line x1="1135.5" y1="68" x2="1135.5" y2="390" stroke="#e8dca0" stroke-width="1" /><line x1="1135" y1="68.5" x2="1189" y2="68.5" stroke="#e8dca0" stroke-width="1" /><path d="M1132,70.5 h3 M1132,74.5 h3 M1132,79.5 h3 M1132,84.5 h3 M1132,88.5 h3 M1132,93.5 h3 M1132,98.5 h3 M1132,102.5 h3 M1132,107.5 h3 M1132,112.5 h3 M1132,117.5 h3 M1132,121.5 h3 M1132,126.5 h3 M1132,131.5 h3 M1132,135.5 h3 M1132,140.5 h3 M1132,145.5 h3 M1132,149.5 h3 M1132,154.5 h3 M1132,159.5 h3 M1132,163.5 h3 M1132,168.5 h3 M1132,173.5 h3 M1132,178.5 h3 M1132,182.5 h3 M1132,187.5 h3 M1132,192.5 h3 M1132,196.5 h3 M1132,201.5 h3 M1132,206.5 h3 M1132,210.5 h3 M1132,215.5 h3 M1132,220.5 h3 M1132,225.5 h3 M1132,229.5 h3 M1132,234.5 h3 M1132,239.5 h3 M1132,243.5 h3 M1132,248.5 h3 M1132,253.5 h3 M1132,257.5 h3 M1132,262.5 h3 M1132,267.5 h3 M1132,272.5 h3 M1132,276.5 h3 M1132,281.5 h3 M1132,286.5 h3 M1132,290.5 h3 M1132,295.5 h3 M1132,300.5 h3 M1132,304.5 h3 M1132,309.5 h3 M1132,314.5 h3 M1132,319.5 h3 M1132,323.5 h3 M1132,328.5 h3 M1132,333.5 h3 M1132,337.5 h3 M1132,342.5 h3 M1132,347.5 h3 M1132,351.5 h3 M1132,356.5 h3 M1132,361.5 h3 M1132,366.5 h3 M1132,370.5 h3 M1132,375.5 h3 M1132,380.5 h3 M1132,384.5 h3" stroke="#e0d890" stroke-width="1"/><text xml:space="preserve" x="1187" y="88" font-size="12" fill="#eeeac0" text-anchor="end" font-weight="normal" font-family="Liberation Sans" textLength="40" lengthAdjust="spacingAndGlyphs" >5960,00</text><text xml:space="preserve" x="1187" y="134.5" font-size="12" fill="#eeeac0" text-anchor="end" font-weight="normal" font-family="Liberation Sans" textLength="40" lengthAdjust="spacingAndGlyphs" >5940,00</text><text xml:space="preserve" x="1187" y="181.5" font-size="12" fill="#eeeac0" text-anchor="end" font-weight="normal" font-family="Liberation Sans" textLength="40" lengthAdjust="spacingAndGlyphs" >5920,00</text><text xml:space="preserve" x="1187" y="229" font-size="12" fill="#eeeac0" text-anchor="end" font-weight="normal" font-family="Liberation Sans" textLength="40" lengthAdjust="spacingAndGlyphs" >5900,00</text><text xml:space="preserve" x="1187" y="275.5" font-size="12" fill="#eeeac0" text-anchor="end" font-weight="normal" font-family="Liberation Sans" textLength="40" lengthAdjust="spacingAndGlyphs" >5880,00</text><text xml:space="preserve" x="1187" y="322.5" font-size="12" fill="#eeeac0" text-anchor="end" font-weight="normal" font-family="Liberation Sans" textLength="40" lengthAdjust="spacingAndGlyphs" >5860,00</text><text xml:space="preserve" x="1187" y="369.5" font-size="12" fill="#eeeac0" text-anchor="end" font-weight="normal" font-family="Liberation Sans" textLength="40" lengthAdjust="spacingAndGlyphs" >5840,00</text><rect x="1135" y="239" width="41" height="13" fill="#30e0f0" /><text xml:space="preserve" x="1136" y="250" font-size="12" fill="#001830" text-anchor="start" font-weight="normal" font-family="Liberation Sans" textLength="39" lengthAdjust="spacingAndGlyphs" >5891,23</text><rect x="1135" y="287" width="41" height="13" fill="#808080" /><text xml:space="preserve" x="1136" y="298" font-size="12" fill="#101010" text-anchor="start" font-weight="normal" font-family="Liberation Sans" textLength="39" lengthAdjust="spacingAndGlyphs" >5870,58</text><rect x="1135" y="321" width="41" height="13" fill="#60e8a0" /><text xml:space="preserve" x="1136" y="332" font-size="12" fill="#002010" text-anchor="start" font-weight="normal" font-family="Liberation Sans" textLength="39" lengthAdjust="spacingAndGlyphs" >5857,13</text><rect x="1135" y="371" width="41" height="13" fill="#ffff00" /><text xml:space="preserve" x="1136" y="382" font-size="12" fill="#000" text-anchor="start" font-weight="normal" font-family="Liberation Sans" textLength="39" lengthAdjust="spacingAndGlyphs" >5835,61</text><rect x="606" y="390" width="584" height="17" fill="url(#navyg)" /><rect x="606" y="407" width="529" height="33" fill="#000" /><rect x="613" y="409" width="522" height="6" fill="#004c00" /><rect x="613" y="431" width="522" height="8" fill="#4c0000" /><rect x="606" y="440" width="584" height="17" fill="url(#navyg)" /><rect x="606" y="457" width="529" height="32" fill="#000" /><rect x="613" y="459" width="522" height="6" fill="#004c00" /><rect x="613" y="482" width="522" height="7" fill="#4c0000" /><rect x="606" y="489" width="584" height="16" fill="url(#navyg)" /><rect x="606" y="505" width="529" height="42" fill="#000" /><rect x="613" y="509" width="522" height="7" fill="#004c00" /><rect x="613" y="536" width="522" height="6" fill="#4c0000" /><rect x="606" y="547" width="584" height="15" fill="url(#navyg)" /><text xml:space="preserve" x="612" y="559" font-size="12" fill="#cccc60" text-anchor="start" font-weight="normal" font-family="Liberation Sans" textLength="79" lengthAdjust="spacingAndGlyphs" >macd(12, 26, 9)</text><rect x="606" y="562" width="529" height="47" fill="#000" /><line x1="646.5" y1="407" x2="646.5" y2="440" stroke="#6a6a6a" stroke-width="1" stroke-dasharray="1 1"/><line x1="646.5" y1="457" x2="646.5" y2="489" stroke="#6a6a6a" stroke-width="1" stroke-dasharray="1 1"/><line x1="646.5" y1="505" x2="646.5" y2="546" stroke="#6a6a6a" stroke-width="1" stroke-dasharray="1 1"/><line x1="646.5" y1="562" x2="646.5" y2="609" stroke="#6a6a6a" stroke-width="1" stroke-dasharray="1 1"/><line x1="711.5" y1="407" x2="711.5" y2="440" stroke="#6a6a6a" stroke-width="1" stroke-dasharray="1 1"/><line x1="711.5" y1="457" x2="711.5" y2="489" stroke="#6a6a6a" stroke-width="1" stroke-dasharray="1 1"/><line x1="711.5" y1="505" x2="711.5" y2="546" stroke="#6a6a6a" stroke-width="1" stroke-dasharray="1 1"/><line x1="711.5" y1="562" x2="711.5" y2="609" stroke="#6a6a6a" stroke-width="1" stroke-dasharray="1 1"/><line x1="750.5" y1="407" x2="750.5" y2="440" stroke="#6a6a6a" stroke-width="1" stroke-dasharray="1 1"/><line x1="750.5" y1="457" x2="750.5" y2="489" stroke="#6a6a6a" stroke-width="1" stroke-dasharray="1 1"/><line x1="750.5" y1="505" x2="750.5" y2="546" stroke="#6a6a6a" stroke-width="1" stroke-dasharray="1 1"/><line x1="750.5" y1="562" x2="750.5" y2="609" stroke="#6a6a6a" stroke-width="1" stroke-dasharray="1 1"/><line x1="789.5" y1="407" x2="789.5" y2="440" stroke="#6a6a6a" stroke-width="1" stroke-dasharray="1 1"/><line x1="789.5" y1="457" x2="789.5" y2="489" stroke="#6a6a6a" stroke-width="1" stroke-dasharray="1 1"/><line x1="789.5" y1="505" x2="789.5" y2="546" stroke="#6a6a6a" stroke-width="1" stroke-dasharray="1 1"/><line x1="789.5" y1="562" x2="789.5" y2="609" stroke="#6a6a6a" stroke-width="1" stroke-dasharray="1 1"/><line x1="828.5" y1="407" x2="828.5" y2="440" stroke="#6a6a6a" stroke-width="1" stroke-dasharray="1 1"/><line x1="828.5" y1="457" x2="828.5" y2="489" stroke="#6a6a6a" stroke-width="1" stroke-dasharray="1 1"/><line x1="828.5" y1="505" x2="828.5" y2="546" stroke="#6a6a6a" stroke-width="1" stroke-dasharray="1 1"/><line x1="828.5" y1="562" x2="828.5" y2="609" stroke="#6a6a6a" stroke-width="1" stroke-dasharray="1 1"/><line x1="867.5" y1="407" x2="867.5" y2="440" stroke="#6a6a6a" stroke-width="1" stroke-dasharray="1 1"/><line x1="867.5" y1="457" x2="867.5" y2="489" stroke="#6a6a6a" stroke-width="1" stroke-dasharray="1 1"/><line x1="867.5" y1="505" x2="867.5" y2="546" stroke="#6a6a6a" stroke-width="1" stroke-dasharray="1 1"/><line x1="867.5" y1="562" x2="867.5" y2="609" stroke="#6a6a6a" stroke-width="1" stroke-dasharray="1 1"/><line x1="906.5" y1="407" x2="906.5" y2="440" stroke="#6a6a6a" stroke-width="1" stroke-dasharray="1 1"/><line x1="906.5" y1="457" x2="906.5" y2="489" stroke="#6a6a6a" stroke-width="1" stroke-dasharray="1 1"/><line x1="906.5" y1="505" x2="906.5" y2="546" stroke="#6a6a6a" stroke-width="1" stroke-dasharray="1 1"/><line x1="906.5" y1="562" x2="906.5" y2="609" stroke="#6a6a6a" stroke-width="1" stroke-dasharray="1 1"/><line x1="945.5" y1="407" x2="945.5" y2="440" stroke="#6a6a6a" stroke-width="1" stroke-dasharray="1 1"/><line x1="945.5" y1="457" x2="945.5" y2="489" stroke="#6a6a6a" stroke-width="1" stroke-dasharray="1 1"/><line x1="945.5" y1="505" x2="945.5" y2="546" stroke="#6a6a6a" stroke-width="1" stroke-dasharray="1 1"/><line x1="945.5" y1="562" x2="945.5" y2="609" stroke="#6a6a6a" stroke-width="1" stroke-dasharray="1 1"/><line x1="984.5" y1="407" x2="984.5" y2="440" stroke="#6a6a6a" stroke-width="1" stroke-dasharray="1 1"/><line x1="984.5" y1="457" x2="984.5" y2="489" stroke="#6a6a6a" stroke-width="1" stroke-dasharray="1 1"/><line x1="984.5" y1="505" x2="984.5" y2="546" stroke="#6a6a6a" stroke-width="1" stroke-dasharray="1 1"/><line x1="984.5" y1="562" x2="984.5" y2="609" stroke="#6a6a6a" stroke-width="1" stroke-dasharray="1 1"/><line x1="1023.5" y1="407" x2="1023.5" y2="440" stroke="#6a6a6a" stroke-width="1" stroke-dasharray="1 1"/><line x1="1023.5" y1="457" x2="1023.5" y2="489" stroke="#6a6a6a" stroke-width="1" stroke-dasharray="1 1"/><line x1="1023.5" y1="505" x2="1023.5" y2="546" stroke="#6a6a6a" stroke-width="1" stroke-dasharray="1 1"/><line x1="1023.5" y1="562" x2="1023.5" y2="609" stroke="#6a6a6a" stroke-width="1" stroke-dasharray="1 1"/><line x1="1062.5" y1="407" x2="1062.5" y2="440" stroke="#6a6a6a" stroke-width="1" stroke-dasharray="1 1"/><line x1="1062.5" y1="457" x2="1062.5" y2="489" stroke="#6a6a6a" stroke-width="1" stroke-dasharray="1 1"/><line x1="1062.5" y1="505" x2="1062.5" y2="546" stroke="#6a6a6a" stroke-width="1" stroke-dasharray="1 1"/><line x1="1062.5" y1="562" x2="1062.5" y2="609" stroke="#6a6a6a" stroke-width="1" stroke-dasharray="1 1"/><line x1="1101.5" y1="407" x2="1101.5" y2="440" stroke="#6a6a6a" stroke-width="1" stroke-dasharray="1 1"/><line x1="1101.5" y1="457" x2="1101.5" y2="489" stroke="#6a6a6a" stroke-width="1" stroke-dasharray="1 1"/><line x1="1101.5" y1="505" x2="1101.5" y2="546" stroke="#6a6a6a" stroke-width="1" stroke-dasharray="1 1"/><line x1="1101.5" y1="562" x2="1101.5" y2="609" stroke="#6a6a6a" stroke-width="1" stroke-dasharray="1 1"/><line x1="606" y1="423.5" x2="1134" y2="423.5" stroke="#8a8a8a" stroke-width="1" stroke-dasharray="3 12" stroke-dashoffset="0"/><line x1="606" y1="473.5" x2="1134" y2="473.5" stroke="#8a8a8a" stroke-width="1" stroke-dasharray="3 12" stroke-dashoffset="0"/><line x1="606" y1="525.5" x2="1134" y2="525.5" stroke="#8a8a8a" stroke-width="1" stroke-dasharray="3 12" stroke-dashoffset="0"/><line x1="613" y1="509.5" x2="1134" y2="509.5" stroke="#707070" stroke-width="1" stroke-dasharray="1 1"/><line x1="613" y1="542.5" x2="1134" y2="542.5" stroke="#707070" stroke-width="1" stroke-dasharray="1 1"/><line x1="606" y1="569.5" x2="1134" y2="569.5" stroke="#8a8a8a" stroke-width="1" stroke-dasharray="3 12" stroke-dashoffset="0"/><line x1="606" y1="582.5" x2="1134" y2="582.5" stroke="#8a8a8a" stroke-width="1" stroke-dasharray="3 12" stroke-dashoffset="0"/><line x1="606" y1="595.5" x2="1134" y2="595.5" stroke="#8a8a8a" stroke-width="1" stroke-dasharray="3 12" stroke-dashoffset="0"/><line x1="613" y1="562.5" x2="1134" y2="562.5" stroke="#707070" stroke-width="1" stroke-dasharray="1 1"/><line x1="613" y1="575.5" x2="1134" y2="575.5" stroke="#707070" stroke-width="1" stroke-dasharray="1 1"/><line x1="613" y1="602.5" x2="1134" y2="602.5" stroke="#707070" stroke-width="1" stroke-dasharray="1 1"/><path d="M606,507.5 h3 M606,511.5 h3 M606,516.5 h3 M606,520.5 h3 M606,525.5 h3 M606,529.5 h3 M606,534.5 h3 M606,538.5 h3 M606,543.5 h3" stroke="#f0f0f0" stroke-width="1"/><path d="M606,564.5 h3 M606,569.5 h3 M606,575.5 h3 M606,580.5 h3 M606,586.5 h3 M606,591.5 h3 M606,597.5 h3 M606,602.5 h3" stroke="#f0f0f0" stroke-width="1"/><rect x="613" y="589" width="13" height="7" fill="#7a0808" /><rect x="625" y="589" width="1" height="7" fill="#4a0404" /><rect x="626" y="589" width="13" height="7" fill="#7a0808" /><rect x="638" y="589" width="1" height="7" fill="#4a0404" /><rect x="639" y="589" width="13" height="7" fill="#7a0808" /><rect x="651" y="589" width="1" height="7" fill="#4a0404" /><rect x="652" y="589" width="13" height="7" fill="#7a0808" /><rect x="664" y="589" width="1" height="7" fill="#4a0404" /><rect x="665" y="589" width="13" height="7" fill="#7a0808" /><rect x="677" y="589" width="1" height="7" fill="#4a0404" /><rect x="678" y="589" width="13" height="7" fill="#7a0808" /><rect x="690" y="589" width="1" height="7" fill="#4a0404" /><rect x="691" y="589" width="13" height="7" fill="#7a0808" /><rect x="703" y="589" width="1" height="7" fill="#4a0404" /><rect x="704" y="589" width="13" height="7" fill="#7a0808" /><rect x="716" y="589" width="1" height="7" fill="#4a0404" /><rect x="717" y="589" width="13" height="7" fill="#7a0808" /><rect x="729" y="589" width="1" height="7" fill="#4a0404" /><rect x="730" y="589" width="13" height="7" fill="#7a0808" /><rect x="742" y="589" width="1" height="7" fill="#4a0404" /><rect x="743" y="589" width="13" height="7" fill="#7a0808" /><rect x="755" y="589" width="1" height="7" fill="#4a0404" /><rect x="756" y="587" width="50" height="2" fill="#20a020" /><rect x="772" y="585" width="22" height="2" fill="#20a020" /><rect x="806" y="589" width="28" height="1.5" fill="#6a0606" /><rect x="834" y="589" width="12" height="3" fill="#7a0808" /><rect x="846" y="589" width="26" height="6" fill="#7a0808" /><rect x="872" y="589" width="59" height="8" fill="#7a0808" /><rect x="931" y="589" width="39" height="6" fill="#7a0808" /><rect x="970" y="589" width="70" height="5" fill="#7a0808" /><rect x="1040" y="589" width="80" height="2.5" fill="#7a0808" /><rect x="1120" y="589" width="10" height="4" fill="#7a0808" /><line x1="613" y1="589.5" x2="1134" y2="589.5" stroke="#8a5050" stroke-width="1" stroke-dasharray="1 1"/><polyline points="619.5,564.6 696.9,571.7 750.7,576.4 797.8,573.0 828.5,573.2 900.0,583.0 945.7,587.5 1000.0,594.5 1058.0,597.0 1097.0,598.0 1127.0,601.0" fill="none" stroke="#f0a040" stroke-width="1" stroke-linejoin="round" /><polyline points="619.5,571.7 643.1,574.0 696.9,575.7 747.4,578.4 787.7,570.7 828.5,574.7 889.0,589.3 945.7,589.3 1000.0,599.5 1042.0,602.5 1080.0,601.5 1106.0,602.5 1127.0,605.0" fill="none" stroke="#30d8e8" stroke-width="1.2" stroke-linejoin="round" /><polyline points="619.5,537.0 633.0,529.3 644.8,534.7 658.2,534.7 671.7,521.2 695.2,520.2 723.8,529.3 737.3,518.5 750.7,521.2 762.5,515.9 774.3,521.2 787.7,521.2 801.2,530.3 814.6,528.6 839.9,538.0 851.6,540.4 878.5,535.4 892.0,537.0 908.8,532.0 929.0,530.3 942.4,532.0 957.6,542.1 972.7,538.0 982.8,534.7 1000.0,535.3 1023.5,530.0 1035.3,532.5 1048.2,527.8 1062.4,531.0 1074.0,529.4 1087.0,535.3 1110.6,537.6 1127.0,543.5" fill="none" stroke="#30d8e8" stroke-width="1.2" stroke-linejoin="round" /><polyline points="976.4,432.5 982.8,433.5 995.7,431.0 1008.5,428.2 1023.5,422.8 1036.4,420.7 1048.2,415.3 1055.7,416.4 1072.8,416.8 1083.5,425.0 1089.9,428.2 1100.6,430.3 1111.3,433.1 1126.3,433.1" fill="none" stroke="#f0a040" stroke-width="1" stroke-linejoin="round" /><polyline points="976.4,426.0 991.4,431.0 1010.7,430.3 1032.1,423.9 1051.4,419.6 1072.8,416.4 1081.3,418.5 1098.5,423.9 1111.3,430.3 1122.0,431.0 1126.3,432.5" fill="none" stroke="#30d8e8" stroke-width="1.2" stroke-linejoin="round" /><polyline points="976.4,486.0 1038.5,486.0 1051.4,482.8 1072.8,478.9 1102.8,478.9 1115.6,481.7 1126.3,485.0" fill="none" stroke="#30d8e8" stroke-width="1.2" stroke-linejoin="round" /><rect x="1135" y="407" width="54" height="33" fill="#00065a" /><line x1="1188.5" y1="407" x2="1188.5" y2="440" stroke="#1c2ca8" stroke-width="1" /><line x1="1135" y1="439.5" x2="1189" y2="439.5" stroke="#1c2ca8" stroke-width="1" /><line x1="1135.5" y1="407" x2="1135.5" y2="440" stroke="#e8dca0" stroke-width="1" /><line x1="1135" y1="407.5" x2="1189" y2="407.5" stroke="#e8dca0" stroke-width="1" /><path d="M1132,409.5 h3 M1132,413.5 h3 M1132,418.5 h3 M1132,422.5 h3 M1132,427.5 h3 M1132,431.5 h3 M1132,436.5 h3" stroke="#e0d890" stroke-width="1"/><rect x="1135" y="457" width="54" height="32" fill="#00065a" /><line x1="1188.5" y1="457" x2="1188.5" y2="489" stroke="#1c2ca8" stroke-width="1" /><line x1="1135" y1="488.5" x2="1189" y2="488.5" stroke="#1c2ca8" stroke-width="1" /><line x1="1135.5" y1="457" x2="1135.5" y2="489" stroke="#e8dca0" stroke-width="1" /><line x1="1135" y1="457.5" x2="1189" y2="457.5" stroke="#e8dca0" stroke-width="1" /><path d="M1132,459.5 h3 M1132,463.5 h3 M1132,468.5 h3 M1132,472.5 h3 M1132,477.5 h3 M1132,481.5 h3 M1132,486.5 h3" stroke="#e0d890" stroke-width="1"/><rect x="1135" y="505" width="54" height="41" fill="#00065a" /><line x1="1188.5" y1="505" x2="1188.5" y2="546" stroke="#1c2ca8" stroke-width="1" /><line x1="1135" y1="545.5" x2="1189" y2="545.5" stroke="#1c2ca8" stroke-width="1" /><line x1="1135.5" y1="505" x2="1135.5" y2="546" stroke="#e8dca0" stroke-width="1" /><line x1="1135" y1="505.5" x2="1189" y2="505.5" stroke="#e8dca0" stroke-width="1" /><path d="M1132,507.5 h3 M1132,511.5 h3 M1132,516.5 h3 M1132,520.5 h3 M1132,525.5 h3 M1132,529.5 h3 M1132,534.5 h3 M1132,538.5 h3 M1132,543.5 h3" stroke="#e0d890" stroke-width="1"/><rect x="1135" y="562" width="54" height="47" fill="#00065a" /><line x1="1188.5" y1="562" x2="1188.5" y2="609" stroke="#1c2ca8" stroke-width="1" /><line x1="1135" y1="608.5" x2="1189" y2="608.5" stroke="#1c2ca8" stroke-width="1" /><line x1="1135.5" y1="562" x2="1135.5" y2="609" stroke="#e8dca0" stroke-width="1" /><line x1="1135" y1="562.5" x2="1189" y2="562.5" stroke="#e8dca0" stroke-width="1" /><path d="M1132,564.5 h3 M1132,568.5 h3 M1132,573.5 h3 M1132,577.5 h3 M1132,582.5 h3 M1132,586.5 h3 M1132,591.5 h3 M1132,595.5 h3 M1132,600.5 h3 M1132,604.5 h3" stroke="#e0d890" stroke-width="1"/><text xml:space="preserve" x="1187" y="419" font-size="12" fill="#eeeac0" text-anchor="end" font-weight="normal" font-family="Liberation Sans" textLength="46" lengthAdjust="spacingAndGlyphs" >100,0000</text><text xml:space="preserve" x="1187" y="438" font-size="12" fill="#eeeac0" text-anchor="end" font-weight="normal" font-family="Liberation Sans" >0</text><rect x="1135" y="426" width="42" height="14" fill="#30e8f8" /><text xml:space="preserve" x="1136" y="438" font-size="12" fill="#002030" text-anchor="start" font-weight="normal" font-family="Liberation Sans" textLength="40" lengthAdjust="spacingAndGlyphs" >20,2138</text><text xml:space="preserve" x="1187" y="468" font-size="12" fill="#eeeac0" text-anchor="end" font-weight="normal" font-family="Liberation Sans" textLength="46" lengthAdjust="spacingAndGlyphs" >100,0000</text><text xml:space="preserve" x="1187" y="490" font-size="12" fill="#eeeac0" text-anchor="end" font-weight="normal" font-family="Liberation Sans" >0</text><rect x="1135" y="479" width="42" height="13" fill="#30e8f8" /><text xml:space="preserve" x="1136" y="490" font-size="12" fill="#002030" text-anchor="start" font-weight="normal" font-family="Liberation Sans" textLength="40" lengthAdjust="spacingAndGlyphs" >14,0358</text><text xml:space="preserve" x="1187" y="518" font-size="12" fill="#eeeac0" text-anchor="end" font-weight="normal" font-family="Liberation Sans" >0</text><rect x="1135" y="534" width="52" height="13" fill="#30e8f8" /><text xml:space="preserve" x="1136" y="545" font-size="12" fill="#002030" text-anchor="start" font-weight="normal" font-family="Liberation Sans" textLength="50" lengthAdjust="spacingAndGlyphs" >-100,0000</text><text xml:space="preserve" x="1187" y="580" font-size="12" fill="#eeeac0" text-anchor="end" font-weight="normal" font-family="Liberation Sans" textLength="40" lengthAdjust="spacingAndGlyphs" >10,0000</text><text xml:space="preserve" x="1187" y="593" font-size="12" fill="#eeeac0" text-anchor="end" font-weight="normal" font-family="Liberation Sans" >0</text><rect x="1135" y="595" width="42" height="13" fill="#30e8f8" /><rect x="1135" y="595" width="36" height="13" fill="#f0a040" /><text xml:space="preserve" x="1136" y="606" font-size="12" fill="#201000" text-anchor="start" font-weight="normal" font-family="Liberation Sans" textLength="40" lengthAdjust="spacingAndGlyphs" >-9,33402</text><rect x="605" y="609" width="530" height="2" fill="#f0f0f0" /><rect x="606" y="611" width="529" height="17" fill="#00004c" /><text xml:space="preserve" x="608.5" y="623.5" font-size="12.5" fill="#f0e040" text-anchor="start" font-weight="bold" font-family="Liberation Sans" textLength="15" lengthAdjust="spacingAndGlyphs" >Mi</text><text xml:space="preserve" x="647" y="623.5" font-size="12.5" fill="#eeeac0" text-anchor="middle" font-weight="normal" font-family="Liberation Sans" textLength="30" lengthAdjust="spacingAndGlyphs" >10:35</text><text xml:space="preserve" x="712" y="623.5" font-size="12.5" fill="#eeeac0" text-anchor="middle" font-weight="normal" font-family="Liberation Sans" textLength="30" lengthAdjust="spacingAndGlyphs" >11:00</text><text xml:space="preserve" x="751" y="623.5" font-size="12.5" fill="#eeeac0" text-anchor="middle" font-weight="normal" font-family="Liberation Sans" textLength="30" lengthAdjust="spacingAndGlyphs" >11:15</text><text xml:space="preserve" x="790" y="623.5" font-size="12.5" fill="#eeeac0" text-anchor="middle" font-weight="normal" font-family="Liberation Sans" textLength="30" lengthAdjust="spacingAndGlyphs" >11:30</text><text xml:space="preserve" x="829" y="623.5" font-size="12.5" fill="#eeeac0" text-anchor="middle" font-weight="normal" font-family="Liberation Sans" textLength="30" lengthAdjust="spacingAndGlyphs" >11:45</text><text xml:space="preserve" x="868" y="623.5" font-size="12.5" fill="#eeeac0" text-anchor="middle" font-weight="normal" font-family="Liberation Sans" textLength="30" lengthAdjust="spacingAndGlyphs" >12:00</text><text xml:space="preserve" x="907" y="623.5" font-size="12.5" fill="#eeeac0" text-anchor="middle" font-weight="normal" font-family="Liberation Sans" textLength="30" lengthAdjust="spacingAndGlyphs" >12:15</text><text xml:space="preserve" x="946" y="623.5" font-size="12.5" fill="#eeeac0" text-anchor="middle" font-weight="normal" font-family="Liberation Sans" textLength="30" lengthAdjust="spacingAndGlyphs" >12:30</text><text xml:space="preserve" x="985" y="623.5" font-size="12.5" fill="#eeeac0" text-anchor="middle" font-weight="normal" font-family="Liberation Sans" textLength="30" lengthAdjust="spacingAndGlyphs" >12:45</text><text xml:space="preserve" x="1024" y="623.5" font-size="12.5" fill="#eeeac0" text-anchor="middle" font-weight="normal" font-family="Liberation Sans" textLength="30" lengthAdjust="spacingAndGlyphs" >13:00</text><text xml:space="preserve" x="1063" y="623.5" font-size="12.5" fill="#eeeac0" text-anchor="middle" font-weight="normal" font-family="Liberation Sans" textLength="30" lengthAdjust="spacingAndGlyphs" >13:15</text><text xml:space="preserve" x="1102" y="623.5" font-size="12.5" fill="#eeeac0" text-anchor="middle" font-weight="normal" font-family="Liberation Sans" textLength="30" lengthAdjust="spacingAndGlyphs" >13:30</text><rect x="1135" y="609" width="55" height="19" fill="#f0efe8" /><g transform="translate(1155,612)"><line x1="0" y1="13" x2="12" y2="1" stroke="#111" stroke-width="1.2"/><path d="M8,4 L11.5,1 L13,5 L15,5.5 L14,9.5 L10,9 Z" fill="#1530d0" stroke="#0a1a80" stroke-width="0.6"/></g><rect x="605" y="628" width="585" height="20" fill="#f0f0f0" /><rect x="606" y="629" width="16" height="17" fill="#efefef" /><line x1="621.5" y1="630" x2="621.5" y2="645" stroke="#c8c8c8" stroke-width="1" /><rect x="622" y="629" width="16" height="17" fill="#efefef" /><line x1="637.5" y1="630" x2="637.5" y2="645" stroke="#c8c8c8" stroke-width="1" /><rect x="638" y="629" width="16" height="17" fill="#efefef" /><line x1="653.5" y1="630" x2="653.5" y2="645" stroke="#c8c8c8" stroke-width="1" /><rect x="654" y="629" width="16" height="17" fill="#efefef" /><line x1="669.5" y1="630" x2="669.5" y2="645" stroke="#c8c8c8" stroke-width="1" /><rect x="606" y="645" width="64" height="1" fill="#a0a0a0" /><rect x="609" y="632.5" width="1.5" height="10" fill="#a8a8a8"/><path d="M617,632.5 L611,637.5 L617,642.5 Z" fill="#a8a8a8"/><path d="M633,632.5 L627,637.5 L633,642.5 Z" fill="#a8a8a8"/><path d="M643,632.5 L649,637.5 L643,642.5 Z" fill="#a8a8a8"/><path d="M658,632.5 L664,637.5 L658,642.5 Z" fill="#a8a8a8"/><rect x="665" y="632.5" width="1.5" height="10" fill="#a8a8a8"/><path d="M671,629 L679.5,645.7 L726.5,645.7 L735.5,629" fill="#ffffff" stroke="#333" stroke-width="1"/><text xml:space="preserve" x="685.5" y="640.8" font-size="13" fill="#111" text-anchor="start" font-weight="bold" font-family="Liberation Sans" textLength="36.5" lengthAdjust="spacingAndGlyphs" >Blatt1</text><line x1="738" y1="629" x2="738" y2="645" stroke="#666" stroke-width="1" /><path d="M747,634 L743.5,637.5 L747,641 Z" fill="#444"/><rect x="1156.5" y="629.5" width="16" height="15" rx="1.5" fill="url(#scrollg)" stroke="#999"/><path d="M1179,634 L1183,637.5 L1179,641 Z" fill="#444"/><defs><linearGradient id="fg64_72" gradientUnits="userSpaceOnUse" x1="0" y1="72" x2="0" y2="103"><stop offset="0" stop-color="#c3d0de"/><stop offset="1" stop-color="#dae4ee"/></linearGradient></defs><path d="M64.5,503.5 L64.5,78 Q64.5,72.5 70,72.5 L969.5,72.5 Q975.5,72.5 975.5,78 L975.5,503.5 Z" fill="url(#fg64_72)" stroke="#4c5a6b" stroke-width="1"/><path d="M65.5,502.5 L65.5,78 Q65.5,73.5 70,73.5 L969.5,73.5 Q974.5,73.5 974.5,78 L974.5,502.5 Z" fill="none" stroke="#eef3f8" stroke-width="1"/><g transform="translate(74,82)"><path d="M3,0.5 L11.5,0.5 L13,3.5 L12.5,5.5 L5,5.5 L5,9 L0.5,9.5 Z" fill="#eee8a0" stroke="#3f5a2a" stroke-width="0.8" stroke-dasharray="1 0.6"/><path d="M11.5,0.5 L13,3.5" stroke="#000" stroke-width="1.6"/><path d="M1,7 L4.5,6.5 L4.5,11 L1.5,11.5 Z" fill="#e8f4d8"/><line x1="0.3" y1="12.8" x2="15.8" y2="3" stroke="#40d0e8" stroke-width="2.2"/><line x1="0.3" y1="12.8" x2="15.8" y2="3" stroke="#0a1a20" stroke-width="0.9"/><rect x="5" y="5.3" width="9.6" height="6.8" fill="#fff6f2" stroke="#000" stroke-width="1"/><rect x="13.8" y="5.5" width="1.2" height="7" fill="#000"/><rect x="3" y="12" width="12" height="1.8" fill="#000"/><path d="M6.5,10.5 L7.5,7.6 L9,10.2 L10.5,7.4 L12.3,9.2" fill="none" stroke="#d05050" stroke-width="0.9"/></g><text xml:space="preserve" x="95" y="95" font-size="12.5" fill="#404a58" text-anchor="start" font-weight="normal" font-family="Liberation Sans" textLength="243" lengthAdjust="spacingAndGlyphs" >Chart15 (Zeitbar 60 min)  MDAX (Indizes Xetra)</text><text xml:space="preserve" x="681.5" y="95" font-size="12.5" fill="#404a58" text-anchor="start" font-weight="normal" font-family="Liberation Sans" textLength="179" lengthAdjust="spacingAndGlyphs" >02.12.2011 15:00 - 21.12.2011 15:00</text><rect x="870.5" y="82.5" width="29.5" height="15.5" rx="2.5" fill="url(#btng)" stroke="#8f9bab" stroke-width="1"/><rect x="871.5" y="83.5" width="27.5" height="13.5" rx="2" fill="none" stroke="#e8eef5" stroke-width="1" opacity="0.7"/><rect x="879.75" y="89.75" width="11" height="4.5" rx="1.5" fill="#fff" stroke="#3a3a3a" stroke-width="1.1"/><rect x="903.5" y="82.5" width="29.5" height="15.5" rx="2.5" fill="url(#btng)" stroke="#8f9bab" stroke-width="1"/><rect x="904.5" y="83.5" width="27.5" height="13.5" rx="2" fill="none" stroke="#e8eef5" stroke-width="1" opacity="0.7"/><rect x="913.25" y="86.25" width="10.5" height="8.5" rx="0.8" fill="#fff" stroke="#3a3a3a" stroke-width="1.2"/><rect x="915.75" y="89.05" width="5.5" height="3" fill="#fff" stroke="#3a3a3a" stroke-width="1"/><rect x="936.5" y="82.5" width="29.5" height="15.5" rx="2.5" fill="url(#btng)" stroke="#8f9bab" stroke-width="1"/><rect x="937.5" y="83.5" width="27.5" height="13.5" rx="2" fill="none" stroke="#e8eef5" stroke-width="1" opacity="0.7"/><path d="M947.85,87.85 L954.65,92.65 M954.65,87.85 L947.85,92.65" stroke="#3a3a3a" stroke-width="3.8" stroke-linecap="round"/><path d="M947.85,87.85 L954.65,92.65 M954.65,87.85 L947.85,92.65" stroke="#fff" stroke-width="1.8" stroke-linecap="round"/><rect x="73" y="102" width="894" height="394" fill="#000" /><rect x="73" y="102" width="894" height="1" fill="#404040" /><rect x="73" y="102" width="1" height="394" fill="#404040" /><rect x="74" y="103" width="893" height="1" fill="#000" /><rect x="74" y="104" width="893" height="15" fill="url(#navyg)" /><rect x="75" y="105" width="5" height="14" fill="#f0a020" /><text xml:space="preserve" x="81.5" y="116.2" font-size="12" fill="#22c422" text-anchor="start" font-weight="normal" font-family="Liberation Sans" textLength="151.8" lengthAdjust="spacingAndGlyphs" >MDAX PERFORMANCE-INDEX</text><text xml:space="preserve" x="876" y="115.5" font-size="12" fill="#22c422" text-anchor="start" font-weight="normal" font-family="Liberation Sans" textLength="35.5" lengthAdjust="spacingAndGlyphs" >60 mins</text><rect x="951" y="105" width="15" height="5.5" fill="#f4f4f4" /><rect x="74" y="119" width="841" height="160" fill="#000" /><line x1="78" y1="142.5" x2="914" y2="142.5" stroke="#7a7a7a" stroke-width="1" stroke-dasharray="1 1"/><line x1="78" y1="187.5" x2="914" y2="187.5" stroke="#7a7a7a" stroke-width="1" stroke-dasharray="1 1"/><line x1="78" y1="232.5" x2="914" y2="232.5" stroke="#7a7a7a" stroke-width="1" stroke-dasharray="1 1"/><line x1="78" y1="276.5" x2="914" y2="276.5" stroke="#7a7a7a" stroke-width="1" stroke-dasharray="1 1"/><line x1="89" y1="120.5" x2="914" y2="120.5" stroke="#6e6e6e" stroke-width="1" stroke-dasharray="3 12" stroke-dashoffset="0"/><line x1="89" y1="165.5" x2="914" y2="165.5" stroke="#6e6e6e" stroke-width="1" stroke-dasharray="3 12" stroke-dashoffset="0"/><line x1="89" y1="209.5" x2="914" y2="209.5" stroke="#6e6e6e" stroke-width="1" stroke-dasharray="3 12" stroke-dashoffset="0"/><line x1="89" y1="254.5" x2="914" y2="254.5" stroke="#6e6e6e" stroke-width="1" stroke-dasharray="3 12" stroke-dashoffset="0"/><line x1="111.5" y1="119" x2="111.5" y2="279" stroke="#626262" stroke-width="1" stroke-dasharray="1 1"/><line x1="174.5" y1="119" x2="174.5" y2="279" stroke="#626262" stroke-width="1" stroke-dasharray="1 1"/><line x1="237.5" y1="119" x2="237.5" y2="279" stroke="#626262" stroke-width="1" stroke-dasharray="1 1"/><line x1="300.5" y1="119" x2="300.5" y2="279" stroke="#626262" stroke-width="1" stroke-dasharray="1 1"/><line x1="363.5" y1="119" x2="363.5" y2="279" stroke="#626262" stroke-width="1" stroke-dasharray="1 1"/><line x1="426.5" y1="119" x2="426.5" y2="279" stroke="#626262" stroke-width="1" stroke-dasharray="1 1"/><line x1="489.5" y1="119" x2="489.5" y2="279" stroke="#626262" stroke-width="1" stroke-dasharray="1 1"/><line x1="552.5" y1="119" x2="552.5" y2="279" stroke="#626262" stroke-width="1" stroke-dasharray="1 1"/><line x1="615.5" y1="119" x2="615.5" y2="279" stroke="#626262" stroke-width="1" stroke-dasharray="1 1"/><line x1="678.5" y1="119" x2="678.5" y2="279" stroke="#626262" stroke-width="1" stroke-dasharray="1 1"/><line x1="741.5" y1="119" x2="741.5" y2="279" stroke="#626262" stroke-width="1" stroke-dasharray="1 1"/><line x1="804.5" y1="119" x2="804.5" y2="279" stroke="#626262" stroke-width="1" stroke-dasharray="1 1"/><line x1="867.5" y1="119" x2="867.5" y2="279" stroke="#626262" stroke-width="1" stroke-dasharray="1 1"/><path d="M74,121.5 h3 M74,125.5 h3 M74,130.5 h3 M74,134.5 h3 M74,139.5 h3 M74,143.5 h3 M74,148.5 h3 M74,152.5 h3 M74,157.5 h3 M74,161.5 h3 M74,166.5 h3 M74,170.5 h3 M74,175.5 h3 M74,179.5 h3 M74,184.5 h3 M74,188.5 h3 M74,193.5 h3 M74,197.5 h3 M74,202.5 h3 M74,206.5 h3 M74,211.5 h3 M74,215.5 h3 M74,220.5 h3 M74,224.5 h3 M74,229.5 h3 M74,233.5 h3 M74,238.5 h3 M74,242.5 h3 M74,247.5 h3 M74,251.5 h3 M74,256.5 h3 M74,260.5 h3 M74,265.5 h3 M74,269.5 h3 M74,274.5 h3" stroke="#f0f0f0" stroke-width="1"/><rect x="89" y="137" width="1" height="10" fill="#e81c1c" /><rect x="87" y="140" width="5" height="2" fill="#e81c1c" /><rect x="96" y="136" width="1" height="10" fill="#e81c1c" /><rect x="94" y="138" width="5" height="6" fill="#e81c1c" /><rect x="103" y="144" width="1" height="7" fill="#e81c1c" /><rect x="101" y="144" width="5" height="2" fill="#e81c1c" /><rect x="110" y="121" width="1" height="13" fill="#1ec81e" /><rect x="108" y="130" width="5" height="4" fill="#1ec81e" /><rect x="118" y="129" width="1" height="8" fill="#1ec81e" /><rect x="116" y="131" width="5" height="2" fill="#1ec81e" /><rect x="125" y="129" width="1" height="5" fill="#e81c1c" /><rect x="123" y="130" width="5" height="2" fill="#e81c1c" /><rect x="131" y="131" width="1" height="7" fill="#e81c1c" /><rect x="129" y="132" width="5" height="4" fill="#e81c1c" /><rect x="138" y="126" width="1" height="8" fill="#1ec81e" /><rect x="136" y="129" width="5" height="5" fill="#1ec81e" /><rect x="145" y="122" width="1" height="9" fill="#1ec81e" /><rect x="143" y="124.5" width="5" height="5.199999999999989" fill="#1ec81e" /><rect x="152" y="123" width="1" height="9" fill="#e81c1c" /><rect x="150" y="126" width="5" height="2" fill="#e81c1c" /><rect x="159" y="125" width="1" height="8" fill="#e81c1c" /><rect x="157" y="126" width="5" height="5.5" fill="#e81c1c" /><rect x="166" y="128" width="1" height="6" fill="#e81c1c" /><rect x="164" y="130" width="5" height="2" fill="#e81c1c" /><rect x="174" y="136" width="1" height="28.5" fill="#1ec81e" /><rect x="172" y="148" width="5" height="2" fill="#1ec81e" /><rect x="180" y="148" width="1" height="15" fill="#e81c1c" /><rect x="178" y="149" width="5" height="5.5" fill="#e81c1c" /><rect x="187" y="140" width="1" height="16" fill="#1ec81e" /><rect x="185" y="140.7" width="5" height="13.800000000000011" fill="#1ec81e" /><rect x="194" y="138.5" width="1" height="7.5" fill="#e81c1c" /><rect x="192" y="140.7" width="5" height="3.3000000000000114" fill="#e81c1c" /><rect x="201" y="143" width="1" height="5" fill="#e81c1c" /><rect x="199" y="143" width="5" height="4" fill="#e81c1c" /><rect x="208" y="143" width="1" height="13" fill="#e81c1c" /><rect x="206" y="147" width="5" height="6.5" fill="#e81c1c" /><rect x="215" y="147" width="1" height="8" fill="#1ec81e" /><rect x="213" y="151" width="5" height="2" fill="#1ec81e" /><rect x="222" y="146" width="1" height="9" fill="#e81c1c" /><rect x="220" y="152" width="5" height="2" fill="#e81c1c" /><rect x="230" y="151" width="1" height="5" fill="#e81c1c" /><rect x="228" y="153" width="5" height="2" fill="#e81c1c" /><rect x="236" y="128.5" width="1" height="14.5" fill="#1ec81e" /><rect x="234" y="133" width="5" height="8.599999999999994" fill="#1ec81e" /><rect x="243" y="133" width="1" height="10.5" fill="#e81c1c" /><rect x="241" y="134" width="5" height="8.5" fill="#e81c1c" /><rect x="250" y="140.5" width="1" height="8.5" fill="#e81c1c" /><rect x="248" y="142" width="5" height="5" fill="#e81c1c" /><rect x="257" y="146" width="1" height="9.699999999999989" fill="#e81c1c" /><rect x="255" y="147" width="5" height="4" fill="#e81c1c" /><rect x="264" y="150.8" width="1" height="12.199999999999989" fill="#e81c1c" /><rect x="262" y="151.7" width="5" height="9.300000000000011" fill="#e81c1c" /><rect x="271" y="158" width="1" height="23" fill="#e81c1c" /><rect x="269" y="161" width="5" height="12.699999999999989" fill="#e81c1c" /><rect x="278" y="168" width="1" height="19.5" fill="#e81c1c" /><rect x="276" y="173.7" width="5" height="2.8000000000000114" fill="#e81c1c" /><rect x="286" y="174.6" width="1" height="8.400000000000006" fill="#1ec81e" /><rect x="284" y="175.5" width="5" height="2" fill="#1ec81e" /><rect x="292" y="172" width="1" height="8" fill="#e81c1c" /><rect x="290" y="175" width="5" height="2" fill="#e81c1c" /><rect x="299" y="161.8" width="1" height="8.199999999999989" fill="#1ec81e" /><rect x="297" y="163.6" width="5" height="3.700000000000017" fill="#1ec81e" /><rect x="307" y="163.6" width="1" height="18.400000000000006" fill="#e81c1c" /><rect x="305" y="165" width="5" height="9.599999999999994" fill="#e81c1c" /><rect x="314" y="173.4" width="1" height="14.099999999999994" fill="#e81c1c" /><rect x="312" y="174.6" width="5" height="12.400000000000006" fill="#e81c1c" /><rect x="320" y="174.6" width="1" height="12.900000000000006" fill="#1ec81e" /><rect x="318" y="175.5" width="5" height="11.5" fill="#1ec81e" /><rect x="327" y="174" width="1" height="9" fill="#e81c1c" /><rect x="325" y="175.5" width="5" height="2" fill="#e81c1c" /><rect x="334" y="172" width="1" height="32" fill="#e81c1c" /><rect x="332" y="178.3" width="5" height="22.899999999999977" fill="#e81c1c" /><rect x="341" y="199.4" width="1" height="15.599999999999994" fill="#e81c1c" /><rect x="339" y="200" width="5" height="10.400000000000006" fill="#e81c1c" /><rect x="348" y="209.5" width="1" height="13.5" fill="#e81c1c" /><rect x="346" y="210.4" width="5" height="5.599999999999994" fill="#e81c1c" /><rect x="355" y="214" width="1" height="7.400000000000006" fill="#e81c1c" /><rect x="353" y="215" width="5" height="2" fill="#e81c1c" /><rect x="362" y="200" width="1" height="33" fill="#1ec81e" /><rect x="360" y="201" width="5" height="27" fill="#1ec81e" /><rect x="370" y="200" width="1" height="17" fill="#e81c1c" /><rect x="368" y="201" width="5" height="13" fill="#e81c1c" /><rect x="376" y="193" width="1" height="23" fill="#1ec81e" /><rect x="374" y="194" width="5" height="20" fill="#1ec81e" /><rect x="383" y="184.4" width="1" height="13.199999999999989" fill="#1ec81e" /><rect x="381" y="185.6" width="5" height="8.400000000000006" fill="#1ec81e" /><rect x="390" y="183" width="1" height="11" fill="#e81c1c" /><rect x="388" y="185.6" width="5" height="7.400000000000006" fill="#e81c1c" /><rect x="397" y="192" width="1" height="20" fill="#e81c1c" /><rect x="395" y="193" width="5" height="16.5" fill="#e81c1c" /><rect x="404" y="191" width="1" height="19.5" fill="#1ec81e" /><rect x="402" y="195" width="5" height="14.5" fill="#1ec81e" /><rect x="412" y="189" width="1" height="12" fill="#e81c1c" /><rect x="410" y="195" width="5" height="2" fill="#e81c1c" /><rect x="418" y="192" width="1" height="5.599999999999994" fill="#1ec81e" /><rect x="416" y="195" width="5" height="2" fill="#1ec81e" /><rect x="425" y="194" width="1" height="17.400000000000006" fill="#e81c1c" /><rect x="423" y="195" width="5" height="14.5" fill="#e81c1c" /><rect x="433" y="208" width="1" height="17" fill="#e81c1c" /><rect x="431" y="209.5" width="5" height="10.099999999999994" fill="#e81c1c" /><rect x="440" y="209" width="1" height="13" fill="#1ec81e" /><rect x="438" y="214" width="5" height="6.5" fill="#1ec81e" /><rect x="446" y="205" width="1" height="10" fill="#1ec81e" /><rect x="444" y="210" width="5" height="4" fill="#1ec81e" /><rect x="454" y="206.8" width="1" height="5.5" fill="#e81c1c" /><rect x="452" y="209.5" width="5" height="2" fill="#e81c1c" /><rect x="460" y="209.5" width="1" height="12.0" fill="#e81c1c" /><rect x="458" y="210.5" width="5" height="8.199999999999989" fill="#e81c1c" /><rect x="467" y="217.8" width="1" height="11.599999999999994" fill="#e81c1c" /><rect x="465" y="218.7" width="5" height="9.300000000000011" fill="#e81c1c" /><rect x="474" y="227" width="1" height="12" fill="#e81c1c" /><rect x="472" y="228" width="5" height="10" fill="#e81c1c" /><rect x="481" y="237" width="1" height="6.5" fill="#e81c1c" /><rect x="479" y="238" width="5" height="2.6999999999999886" fill="#e81c1c" /><rect x="488" y="226" width="1" height="21" fill="#e81c1c" /><rect x="486" y="237" width="5" height="5.599999999999994" fill="#e81c1c" /><rect x="496" y="234" width="1" height="15" fill="#1ec81e" /><rect x="494" y="236" width="5" height="5.599999999999994" fill="#1ec81e" /><rect x="502" y="226" width="1" height="10" fill="#1ec81e" /><rect x="500" y="227" width="5" height="8" fill="#1ec81e" /><rect x="509" y="218.3" width="1" height="9.699999999999989" fill="#1ec81e" /><rect x="507" y="222.4" width="5" height="4.599999999999994" fill="#1ec81e" /><rect x="516" y="219.6" width="1" height="8.400000000000006" fill="#1ec81e" /><rect x="514" y="220.5" width="5" height="2" fill="#1ec81e" /><rect x="523" y="219.6" width="1" height="9.800000000000011" fill="#e81c1c" /><rect x="521" y="220.5" width="5" height="4.5" fill="#e81c1c" /><rect x="530" y="215" width="1" height="13" fill="#1ec81e" /><rect x="528" y="222.4" width="5" height="2.5999999999999943" fill="#1ec81e" /><rect x="537" y="218.3" width="1" height="18.69999999999999" fill="#e81c1c" /><rect x="535" y="220.5" width="5" height="11.099999999999994" fill="#e81c1c" /><rect x="544" y="229.7" width="1" height="11.900000000000006" fill="#e81c1c" /><rect x="542" y="230.6" width="5" height="3.700000000000017" fill="#e81c1c" /><rect x="551" y="229.7" width="1" height="18.30000000000001" fill="#e81c1c" /><rect x="549" y="239" width="5" height="5.400000000000006" fill="#e81c1c" /><rect x="558" y="234.8" width="1" height="14.199999999999989" fill="#1ec81e" /><rect x="556" y="235.6" width="5" height="7.900000000000006" fill="#1ec81e" /><rect x="565" y="234.3" width="1" height="12.299999999999983" fill="#e81c1c" /><rect x="563" y="235.6" width="5" height="10.400000000000006" fill="#e81c1c" /><rect x="572" y="244.8" width="1" height="17.0" fill="#e81c1c" /><rect x="570" y="246" width="5" height="15" fill="#e81c1c" /><rect x="580" y="251.7" width="1" height="11.0" fill="#1ec81e" /><rect x="578" y="252.7" width="5" height="8.300000000000011" fill="#1ec81e" /><rect x="587" y="250.3" width="1" height="15.199999999999989" fill="#e81c1c" /><rect x="585" y="252.7" width="5" height="11.900000000000034" fill="#e81c1c" /><rect x="593" y="260" width="1" height="10" fill="#e81c1c" /><rect x="591" y="263.7" width="5" height="2" fill="#e81c1c" /><rect x="600" y="262.7" width="1" height="11.100000000000023" fill="#e81c1c" /><rect x="598" y="263.7" width="5" height="9.100000000000023" fill="#e81c1c" /><rect x="607" y="271" width="1" height="6.399999999999977" fill="#e81c1c" /><rect x="605" y="272.8" width="5" height="3.6999999999999886" fill="#e81c1c" /><rect x="614" y="257.2" width="1" height="15.600000000000023" fill="#1ec81e" /><rect x="612" y="259" width="5" height="13" fill="#1ec81e" /><rect x="622" y="255" width="1" height="20.80000000000001" fill="#e81c1c" /><rect x="620" y="259" width="5" height="13" fill="#e81c1c" /><rect x="628" y="258.2" width="1" height="16.5" fill="#1ec81e" /><rect x="626" y="260" width="5" height="13" fill="#1ec81e" /><rect x="635" y="253.6" width="1" height="8.200000000000017" fill="#e81c1c" /><rect x="633" y="260" width="5" height="2" fill="#e81c1c" /><rect x="642" y="247" width="1" height="13.600000000000023" fill="#1ec81e" /><rect x="640" y="249" width="5" height="11" fill="#1ec81e" /><rect x="650" y="236" width="1" height="15" fill="#1ec81e" /><rect x="648" y="239" width="5" height="11" fill="#1ec81e" /><rect x="656" y="237" width="1" height="7" fill="#e81c1c" /><rect x="654" y="238.5" width="5" height="2" fill="#e81c1c" /><rect x="663" y="236" width="1" height="24" fill="#e81c1c" /><rect x="661" y="240" width="5" height="15.400000000000006" fill="#e81c1c" /><rect x="670" y="247" width="1" height="10.199999999999989" fill="#1ec81e" /><rect x="668" y="250" width="5" height="6.300000000000011" fill="#1ec81e" /><rect x="678" y="232.5" width="1" height="13.5" fill="#1ec81e" /><rect x="676" y="238" width="5" height="7.300000000000011" fill="#1ec81e" /><rect x="684" y="230.6" width="1" height="9.200000000000017" fill="#e81c1c" /><rect x="682" y="238" width="5" height="2" fill="#e81c1c" /><rect x="691" y="229.7" width="1" height="11.0" fill="#e81c1c" /><rect x="689" y="239" width="5" height="2" fill="#e81c1c" /><rect x="698" y="239.2" width="1" height="8.800000000000011" fill="#e81c1c" /><rect x="696" y="240" width="5" height="5" fill="#e81c1c" /><rect x="706" y="234" width="1" height="15" fill="#1ec81e" /><rect x="704" y="242" width="5" height="2.8000000000000114" fill="#1ec81e" /><rect x="712" y="239" width="1" height="5.800000000000011" fill="#e81c1c" /><rect x="710" y="241" width="5" height="2" fill="#e81c1c" /><rect x="719" y="240.7" width="1" height="8.300000000000011" fill="#e81c1c" /><rect x="717" y="242.5" width="5" height="2.8000000000000114" fill="#e81c1c" /><rect x="727" y="239" width="1" height="8" fill="#e81c1c" /><rect x="725" y="245.3" width="5" height="2" fill="#e81c1c" /><rect x="733" y="243.5" width="1" height="7.5" fill="#e81c1c" /><rect x="731" y="244.4" width="5" height="2" fill="#e81c1c" /><rect x="740" y="243.5" width="1" height="18.5" fill="#1ec81e" /><rect x="738" y="247" width="5" height="13" fill="#1ec81e" /><rect x="747" y="236" width="1" height="13" fill="#1ec81e" /><rect x="745" y="238" width="5" height="8" fill="#1ec81e" /><rect x="754" y="234.3" width="1" height="7.299999999999983" fill="#e81c1c" /><rect x="752" y="238" width="5" height="2.6999999999999886" fill="#e81c1c" /><rect x="762" y="233.4" width="1" height="8.199999999999989" fill="#1ec81e" /><rect x="760" y="234.3" width="5" height="6.399999999999977" fill="#1ec81e" /><rect x="768" y="232.5" width="1" height="10.5" fill="#e81c1c" /><rect x="766" y="234.3" width="5" height="7.299999999999983" fill="#e81c1c" /><rect x="775" y="234.8" width="1" height="9.199999999999989" fill="#1ec81e" /><rect x="773" y="236.7" width="5" height="5.300000000000011" fill="#1ec81e" /><rect x="783" y="236" width="1" height="7.5" fill="#e81c1c" /><rect x="781" y="236.7" width="5" height="6.300000000000011" fill="#e81c1c" /><rect x="790" y="241" width="1" height="16.19999999999999" fill="#e81c1c" /><rect x="788" y="243" width="5" height="13.300000000000011" fill="#e81c1c" /><rect x="796" y="253.6" width="1" height="9.099999999999994" fill="#e81c1c" /><rect x="794" y="255.4" width="5" height="2" fill="#e81c1c" /><rect x="803" y="244.8" width="1" height="15.199999999999989" fill="#1ec81e" /><rect x="801" y="247" width="5" height="10" fill="#1ec81e" /><rect x="810" y="239.8" width="1" height="10.5" fill="#1ec81e" /><rect x="808" y="241.7" width="5" height="5.300000000000011" fill="#1ec81e" /><rect x="817" y="238" width="1" height="6.400000000000006" fill="#1ec81e" /><rect x="815" y="240.7" width="5" height="2" fill="#1ec81e" /><rect x="824" y="236" width="1" height="8.400000000000006" fill="#e81c1c" /><rect x="822" y="240.7" width="5" height="2" fill="#e81c1c" /><rect x="832" y="234.3" width="1" height="9.199999999999989" fill="#1ec81e" /><rect x="830" y="235" width="5" height="7.599999999999994" fill="#1ec81e" /><rect x="838" y="227" width="1" height="13.699999999999989" fill="#1ec81e" /><rect x="836" y="228.8" width="5" height="6.199999999999989" fill="#1ec81e" /><rect x="846" y="206.8" width="1" height="22.899999999999977" fill="#1ec81e" /><rect x="844" y="207.7" width="5" height="21.100000000000023" fill="#1ec81e" /><rect x="852" y="203.4" width="1" height="5.199999999999989" fill="#1ec81e" /><rect x="850" y="206" width="5" height="2" fill="#1ec81e" /><rect x="859" y="199.4" width="1" height="7.400000000000006" fill="#1ec81e" /><rect x="857" y="200" width="5" height="6" fill="#1ec81e" /><rect x="867" y="184" width="1" height="11" fill="#e81c1c" /><rect x="865" y="190" width="5" height="4" fill="#e81c1c" /><rect x="873" y="184" width="1" height="14.5" fill="#1ec81e" /><rect x="871" y="184.7" width="5" height="9.300000000000011" fill="#1ec81e" /><rect x="880" y="168" width="1" height="20.400000000000006" fill="#e81c1c" /><rect x="878" y="184.7" width="5" height="3.3000000000000114" fill="#e81c1c" /><rect x="887" y="180" width="1" height="15.699999999999989" fill="#e81c1c" /><rect x="885" y="187.5" width="5" height="3.5" fill="#e81c1c" /><rect x="894" y="187.5" width="1" height="11.0" fill="#e81c1c" /><rect x="892" y="191" width="5" height="6.599999999999994" fill="#e81c1c" /><rect x="915" y="119" width="51" height="160" fill="#00065a" /><line x1="965.5" y1="119" x2="965.5" y2="279" stroke="#1c2ca8" stroke-width="1" /><line x1="915" y1="278.5" x2="966" y2="278.5" stroke="#1c2ca8" stroke-width="1" /><line x1="915.5" y1="119" x2="915.5" y2="279" stroke="#e8dca0" stroke-width="1" /><line x1="915" y1="119.5" x2="966" y2="119.5" stroke="#e8dca0" stroke-width="1" /><path d="M912,121.5 h3 M912,125.5 h3 M912,130.5 h3 M912,134.5 h3 M912,139.5 h3 M912,143.5 h3 M912,148.5 h3 M912,152.5 h3 M912,157.5 h3 M912,161.5 h3 M912,166.5 h3 M912,170.5 h3 M912,175.5 h3 M912,179.5 h3 M912,184.5 h3 M912,188.5 h3 M912,193.5 h3 M912,197.5 h3 M912,202.5 h3 M912,206.5 h3 M912,211.5 h3 M912,215.5 h3 M912,220.5 h3 M912,224.5 h3 M912,229.5 h3 M912,233.5 h3 M912,238.5 h3 M912,242.5 h3 M912,247.5 h3 M912,251.5 h3 M912,256.5 h3 M912,260.5 h3 M912,265.5 h3 M912,269.5 h3 M912,274.5 h3" stroke="#e8e4c0" stroke-width="1"/><text xml:space="preserve" x="964" y="146.8" font-size="12" fill="#eeeac0" text-anchor="end" font-weight="normal" font-family="Liberation Sans" textLength="39" lengthAdjust="spacingAndGlyphs" >9000,00</text><text xml:space="preserve" x="964" y="191.8" font-size="12" fill="#eeeac0" text-anchor="end" font-weight="normal" font-family="Liberation Sans" textLength="39" lengthAdjust="spacingAndGlyphs" >8800,00</text><text xml:space="preserve" x="964" y="236.8" font-size="12" fill="#eeeac0" text-anchor="end" font-weight="normal" font-family="Liberation Sans" textLength="39" lengthAdjust="spacingAndGlyphs" >8600,00</text><text xml:space="preserve" x="964" y="277.8" font-size="12" fill="#eeeac0" text-anchor="end" font-weight="normal" font-family="Liberation Sans" textLength="39" lengthAdjust="spacingAndGlyphs" >8400,00</text><rect x="916" y="192" width="40" height="12.5" fill="#ffff00" /><text xml:space="preserve" x="917" y="203" font-size="12" fill="#000" text-anchor="start" font-weight="normal" font-family="Liberation Sans" textLength="38" lengthAdjust="spacingAndGlyphs" >8752,33</text><rect x="74" y="280" width="893" height="17" fill="url(#navyg)" /><text xml:space="preserve" x="81" y="293.5" font-size="12" fill="#e0dc80" text-anchor="start" font-weight="normal" font-family="Liberation Sans" textLength="111" lengthAdjust="spacingAndGlyphs" >stoc_sl(14, 3, 3, 80, 20)</text><rect x="74" y="297" width="841" height="66" fill="#000" /><rect x="86" y="298" width="829" height="13" fill="#005000" /><rect x="86" y="348" width="829" height="14" fill="#500000" /><line x1="111.5" y1="297" x2="111.5" y2="362" stroke="#6e6e6e" stroke-width="1" stroke-dasharray="1 1"/><line x1="174.5" y1="297" x2="174.5" y2="362" stroke="#6e6e6e" stroke-width="1" stroke-dasharray="1 1"/><line x1="237.5" y1="297" x2="237.5" y2="362" stroke="#6e6e6e" stroke-width="1" stroke-dasharray="1 1"/><line x1="300.5" y1="297" x2="300.5" y2="362" stroke="#6e6e6e" stroke-width="1" stroke-dasharray="1 1"/><line x1="363.5" y1="297" x2="363.5" y2="362" stroke="#6e6e6e" stroke-width="1" stroke-dasharray="1 1"/><line x1="426.5" y1="297" x2="426.5" y2="362" stroke="#6e6e6e" stroke-width="1" stroke-dasharray="1 1"/><line x1="489.5" y1="297" x2="489.5" y2="362" stroke="#6e6e6e" stroke-width="1" stroke-dasharray="1 1"/><line x1="552.5" y1="297" x2="552.5" y2="362" stroke="#6e6e6e" stroke-width="1" stroke-dasharray="1 1"/><line x1="615.5" y1="297" x2="615.5" y2="362" stroke="#6e6e6e" stroke-width="1" stroke-dasharray="1 1"/><line x1="678.5" y1="297" x2="678.5" y2="362" stroke="#6e6e6e" stroke-width="1" stroke-dasharray="1 1"/><line x1="741.5" y1="297" x2="741.5" y2="362" stroke="#6e6e6e" stroke-width="1" stroke-dasharray="1 1"/><line x1="804.5" y1="297" x2="804.5" y2="362" stroke="#6e6e6e" stroke-width="1" stroke-dasharray="1 1"/><line x1="867.5" y1="297" x2="867.5" y2="362" stroke="#6e6e6e" stroke-width="1" stroke-dasharray="1 1"/><line x1="84" y1="314.5" x2="914" y2="314.5" stroke="#8a8a8a" stroke-width="1" stroke-dasharray="3 12" stroke-dashoffset="0"/><line x1="84" y1="344.5" x2="914" y2="344.5" stroke="#8a8a8a" stroke-width="1" stroke-dasharray="3 12" stroke-dashoffset="0"/><line x1="78" y1="329.5" x2="914" y2="329.5" stroke="#8a8a8a" stroke-width="1" stroke-dasharray="1 1"/><line x1="78" y1="362.5" x2="914" y2="362.5" stroke="#8a8a8a" stroke-width="1" stroke-dasharray="1 1"/><path d="M74,299.5 h3 M74,303.5 h3 M74,308.5 h3 M74,312.5 h3 M74,317.5 h3 M74,321.5 h3 M74,326.5 h3 M74,330.5 h3 M74,335.5 h3 M74,339.5 h3 M74,344.5 h3 M74,348.5 h3 M74,353.5 h3 M74,357.5 h3" stroke="#f0f0f0" stroke-width="1"/><path d="M89.1,312.1 C91.9,314.0 98.1,322.3 104.7,322.5 C111.3,322.7 119.2,314.8 125.5,313.4 C131.8,312.0 134.7,315.3 139.8,314.7 C144.9,314.1 150.4,310.9 154.1,310.3 C157.8,309.7 155.7,306.5 160.6,311.3 C165.5,316.1 175.3,332.2 181.4,336.8 C187.5,341.4 190.9,337.7 194.4,336.8 C197.9,335.9 197.6,330.9 200.9,331.6 C204.2,332.3 207.7,338.4 212.6,340.7 C217.5,343.0 221.4,347.4 228.2,344.6 C235.0,341.8 244.2,326.7 250.3,325.1 C256.4,323.5 256.9,330.6 262.0,335.5 C267.1,340.4 273.3,349.8 278.9,352.4 C284.5,355.0 289.0,351.2 293.2,349.8 C297.4,348.4 298.6,345.3 302.3,344.6 C306.0,343.9 310.5,344.7 314.0,345.9 C317.5,347.1 317.1,349.5 321.8,351.1 C326.5,352.7 334.4,353.8 340.0,355.0 C345.6,356.2 348.9,359.0 353.0,357.6 C357.1,356.2 359.6,349.8 362.8,347.2 C366.0,344.6 367.8,345.6 370.6,343.3 C373.4,341.0 374.9,337.7 378.4,334.2 C381.9,330.7 386.8,324.8 390.1,323.8 C393.4,322.8 392.6,327.7 396.6,328.5 C400.6,329.3 408.2,329.8 412.2,328.5 C416.2,327.2 416.4,321.6 418.7,321.2 C421.0,320.8 421.5,323.4 425.2,326.4 C428.9,329.4 434.6,336.8 439.5,338.1 C444.4,339.4 449.0,333.9 452.5,333.7 C456.0,333.5 455.0,332.1 459.0,336.8 C463.0,341.5 469.9,355.7 474.6,359.7 C479.3,363.7 481.3,359.7 485.0,358.9 C488.7,358.1 490.7,359.0 495.4,355.0 C500.1,351.0 504.9,342.2 511.0,336.8 C517.1,331.4 523.6,326.3 529.2,325.1 C534.8,323.9 538.0,327.3 542.2,330.3 C546.4,333.3 549.8,339.7 552.6,342.0 C555.4,344.3 555.0,342.1 557.8,343.3 C560.6,344.5 564.0,346.6 568.2,348.5 C572.4,350.4 574.6,351.8 581.2,353.7 C587.8,355.6 598.5,358.7 604.6,358.9 C610.7,359.1 610.8,357.2 615.0,355.0 C619.2,352.8 624.4,348.3 628.0,346.7 C631.6,345.1 630.2,352.4 635.2,345.9 C640.2,339.4 651.3,316.9 656.0,310.8 C660.7,304.7 658.6,310.8 661.2,312.1 C663.8,313.4 667.3,317.0 670.3,318.1 C673.3,319.2 674.6,319.8 678.1,318.1 C681.6,316.4 685.8,309.3 689.8,308.7 C693.8,308.1 694.6,313.2 700.2,314.7 C705.8,316.2 713.5,314.3 721.0,317.3 C728.5,320.3 734.3,332.3 741.8,331.6 C749.3,330.9 756.5,316.4 762.6,313.4 C768.7,310.4 771.4,313.3 775.6,314.7 C779.8,316.1 782.3,317.2 786.0,321.2 C789.7,325.2 793.4,333.1 796.4,336.8 C799.4,340.5 799.2,344.3 802.9,341.5 C806.6,338.7 811.4,327.0 817.2,321.2 C823.1,315.4 830.3,313.2 835.4,309.5 C840.5,305.8 841.6,301.9 845.8,300.4 C850.0,298.9 854.6,300.5 858.8,300.9 C863.0,301.3 866.4,302.4 869.2,302.5 C872.0,302.6 871.6,301.1 874.4,301.7 C877.2,302.3 881.1,303.3 884.8,305.6 C888.5,307.9 893.3,313.1 895.2,314.7" fill="none" stroke="#f0a040" stroke-width="0.95" /><path d="M89.1,312.1 C92.6,313.6 103.5,319.3 108.6,320.7 C113.7,322.1 113.7,321.0 117.7,319.9 C121.7,318.8 125.6,315.9 130.7,314.7 C135.8,313.5 140.9,314.0 146.3,313.4 C151.7,312.8 156.9,311.3 160.6,311.3 C164.3,311.3 162.4,309.3 167.1,313.4 C171.8,317.5 180.3,330.5 186.6,334.2 C192.9,337.9 197.1,333.7 202.2,334.2 C207.3,334.7 210.1,335.2 215.2,336.8 C220.3,338.4 226.6,342.4 230.8,343.3 C235.0,344.2 234.2,344.6 238.6,342.0 C243.0,339.4 251.3,331.1 255.5,329.0 C259.7,326.9 256.6,326.6 262.0,330.3 C267.4,334.0 279.3,346.3 285.4,349.8 C291.5,353.3 292.1,350.7 295.8,349.8 C299.5,348.9 302.0,345.1 306.2,344.6 C310.4,344.1 315.0,345.8 319.2,347.2 C323.4,348.6 325.9,351.2 329.6,352.4 C333.3,353.6 335.3,353.0 340.0,353.7 C344.7,354.4 351.5,356.3 355.6,356.3 C359.7,356.3 359.2,356.3 362.8,353.7 C366.4,351.1 370.7,346.4 375.8,342.0 C380.9,337.6 385.3,331.4 391.4,329.0 C397.5,326.6 403.5,329.2 409.6,328.5 C415.7,327.8 421.0,325.0 425.2,325.1 C429.4,325.2 429.7,327.1 433.0,329.0 C436.3,330.9 438.7,334.1 443.4,335.5 C448.1,336.9 454.3,335.2 459.0,336.8 C463.7,338.4 464.7,340.9 469.4,344.6 C474.1,348.3 481.3,355.0 485.0,357.6 C488.7,360.2 487.4,359.6 490.2,358.9 C493.0,358.2 495.9,357.2 500.6,353.7 C505.3,350.2 510.1,344.1 516.2,339.4 C522.3,334.7 529.3,329.3 534.4,327.7 C539.5,326.1 539.7,327.5 544.8,330.3 C549.9,333.1 556.0,339.3 563.0,343.3 C570.0,347.3 576.8,349.7 583.8,352.4 C590.8,355.1 595.4,357.4 602.0,358.1 C608.6,358.8 615.2,357.6 620.2,356.3 C625.2,355.0 626.8,352.7 630.0,351.1 C633.2,349.5 634.1,350.2 637.8,347.2 C641.5,344.2 646.1,340.1 650.8,334.2 C655.5,328.3 659.1,318.0 663.8,314.7 C668.5,311.4 670.7,316.7 676.8,316.0 C682.9,315.3 689.6,310.6 697.6,310.8 C705.6,311.0 712.6,314.0 721.0,317.3 C729.4,320.6 738.8,327.1 744.4,329.0 C750.0,330.9 748.9,329.6 752.2,327.7 C755.5,325.8 758.4,321.1 762.6,318.6 C766.8,316.1 770.9,313.2 775.6,313.9 C780.3,314.6 783.5,318.4 788.6,322.5 C793.7,326.6 800.5,334.1 804.2,336.8 C807.9,339.5 806.1,339.6 809.4,337.3 C812.7,335.0 817.3,328.3 822.4,323.8 C827.5,319.3 832.4,315.9 838.0,312.1 C843.6,308.3 849.4,304.5 853.6,302.5 C857.8,300.5 857.7,301.0 861.4,300.9 C865.1,300.8 870.2,301.1 874.4,301.7 C878.6,302.3 881.1,302.9 884.8,304.3 C888.5,305.7 893.3,308.6 895.2,309.5" fill="none" stroke="#40d8e0" stroke-width="1.05" /><rect x="915" y="297" width="51" height="66" fill="#00065a" /><line x1="965.5" y1="297" x2="965.5" y2="363" stroke="#1c2ca8" stroke-width="1" /><line x1="915" y1="362.5" x2="966" y2="362.5" stroke="#1c2ca8" stroke-width="1" /><line x1="915.5" y1="297" x2="915.5" y2="363" stroke="#e8dca0" stroke-width="1" /><line x1="915" y1="297.5" x2="966" y2="297.5" stroke="#e8dca0" stroke-width="1" /><path d="M912,299.5 h3 M912,303.5 h3 M912,308.5 h3 M912,312.5 h3 M912,317.5 h3 M912,321.5 h3 M912,326.5 h3 M912,330.5 h3 M912,335.5 h3 M912,339.5 h3 M912,344.5 h3 M912,348.5 h3 M912,353.5 h3 M912,357.5 h3" stroke="#e8e4c0" stroke-width="1"/><text xml:space="preserve" x="964" y="305" font-size="12" fill="#eeeac0" text-anchor="end" font-weight="normal" font-family="Liberation Sans" textLength="45" lengthAdjust="spacingAndGlyphs" >100,0000</text><text xml:space="preserve" x="964" y="334.2" font-size="12" fill="#eeeac0" text-anchor="end" font-weight="normal" font-family="Liberation Sans" textLength="39" lengthAdjust="spacingAndGlyphs" >50,0000</text><text xml:space="preserve" x="964" y="361.8" font-size="12" fill="#eeeac0" text-anchor="end" font-weight="normal" font-family="Liberation Sans" >0</text><rect x="916" y="308.8" width="41.5" height="12" fill="#f0a040" /><text xml:space="preserve" x="917" y="319.8" font-size="12" fill="#201000" text-anchor="start" font-weight="normal" font-family="Liberation Sans" textLength="38" lengthAdjust="spacingAndGlyphs" >74,6428</text><rect x="916" y="303.5" width="41.5" height="12" fill="#30e8f8" /><text xml:space="preserve" x="917" y="314.6" font-size="12" fill="#002030" text-anchor="start" font-weight="normal" font-family="Liberation Sans" textLength="38" lengthAdjust="spacingAndGlyphs" >82,1794</text><rect x="74" y="363" width="893" height="18" fill="url(#navyg)" /><text xml:space="preserve" x="81" y="376.5" font-size="12" fill="#e0dc80" text-anchor="start" font-weight="normal" font-family="Liberation Sans" textLength="124" lengthAdjust="spacingAndGlyphs" >dss_bressert(21, 3, 80, 20)</text><rect x="74" y="381" width="841" height="76" fill="#000" /><rect x="86" y="382" width="829" height="14" fill="#005000" /><rect x="86" y="440" width="829" height="15" fill="#500000" /><line x1="111.5" y1="381" x2="111.5" y2="457" stroke="#6e6e6e" stroke-width="1" stroke-dasharray="1 1"/><line x1="174.5" y1="381" x2="174.5" y2="457" stroke="#6e6e6e" stroke-width="1" stroke-dasharray="1 1"/><line x1="237.5" y1="381" x2="237.5" y2="457" stroke="#6e6e6e" stroke-width="1" stroke-dasharray="1 1"/><line x1="300.5" y1="381" x2="300.5" y2="457" stroke="#6e6e6e" stroke-width="1" stroke-dasharray="1 1"/><line x1="363.5" y1="381" x2="363.5" y2="457" stroke="#6e6e6e" stroke-width="1" stroke-dasharray="1 1"/><line x1="426.5" y1="381" x2="426.5" y2="457" stroke="#6e6e6e" stroke-width="1" stroke-dasharray="1 1"/><line x1="489.5" y1="381" x2="489.5" y2="457" stroke="#6e6e6e" stroke-width="1" stroke-dasharray="1 1"/><line x1="552.5" y1="381" x2="552.5" y2="457" stroke="#6e6e6e" stroke-width="1" stroke-dasharray="1 1"/><line x1="615.5" y1="381" x2="615.5" y2="457" stroke="#6e6e6e" stroke-width="1" stroke-dasharray="1 1"/><line x1="678.5" y1="381" x2="678.5" y2="457" stroke="#6e6e6e" stroke-width="1" stroke-dasharray="1 1"/><line x1="741.5" y1="381" x2="741.5" y2="457" stroke="#6e6e6e" stroke-width="1" stroke-dasharray="1 1"/><line x1="804.5" y1="381" x2="804.5" y2="457" stroke="#6e6e6e" stroke-width="1" stroke-dasharray="1 1"/><line x1="867.5" y1="381" x2="867.5" y2="457" stroke="#6e6e6e" stroke-width="1" stroke-dasharray="1 1"/><line x1="84" y1="400.5" x2="914" y2="400.5" stroke="#8a8a8a" stroke-width="1" stroke-dasharray="3 12" stroke-dashoffset="0"/><line x1="84" y1="436.5" x2="914" y2="436.5" stroke="#8a8a8a" stroke-width="1" stroke-dasharray="3 12" stroke-dashoffset="0"/><line x1="78" y1="418.5" x2="914" y2="418.5" stroke="#a0a0a0" stroke-width="1" stroke-dasharray="1 1"/><line x1="78" y1="454.5" x2="914" y2="454.5" stroke="#a0a0a0" stroke-width="1" stroke-dasharray="1 1"/><path d="M74,383.5 h3 M74,387.5 h3 M74,392.5 h3 M74,396.5 h3 M74,401.5 h3 M74,405.5 h3 M74,410.5 h3 M74,414.5 h3 M74,419.5 h3 M74,423.5 h3 M74,428.5 h3 M74,432.5 h3 M74,437.5 h3 M74,441.5 h3 M74,446.5 h3 M74,450.5 h3 M74,455.5 h3" stroke="#f0f0f0" stroke-width="1"/><path d="M89.1,409.6 C91.9,415.2 100.7,434.7 104.7,440.8 C108.7,446.9 107.5,442.7 111.2,443.4 C114.9,444.1 121.8,443.7 125.5,444.7 C129.2,445.7 129.7,449.1 132.0,449.1 C134.3,449.1 134.8,450.2 138.5,444.7 C142.2,439.2 148.8,422.7 152.8,418.7 C156.8,414.7 157.3,419.1 160.6,422.6 C163.9,426.1 167.3,433.4 171.0,438.2 C174.7,443.0 177.2,447.8 181.4,449.1 C185.6,450.4 190.2,445.6 194.4,445.5 C198.6,445.4 200.6,447.3 204.8,448.6 C209.0,449.9 213.4,451.5 217.8,452.5 C222.2,453.5 226.2,456.9 229.5,454.3 C232.8,451.7 233.4,442.1 236.0,438.2 C238.6,434.3 240.8,433.4 243.8,432.5 C246.8,431.6 249.6,431.5 252.9,433.0 C256.2,434.5 258.5,437.8 262.0,440.8 C265.5,443.8 268.7,447.6 272.4,449.9 C276.1,452.1 278.6,452.8 282.8,453.3 C287.0,453.8 292.1,453.6 295.8,452.5 C299.5,451.4 300.3,447.8 303.6,447.3 C306.9,446.8 310.3,449.8 314.0,449.9 C317.7,450.0 319.7,447.6 324.4,448.1 C329.1,448.6 334.4,451.4 340.0,452.5 C345.6,453.6 351.5,455.9 355.6,454.3 C359.7,452.7 360.3,446.3 362.8,443.4 C365.3,440.5 364.4,445.7 369.3,438.2 C374.2,430.7 385.2,408.6 390.1,401.8 C395.0,395.0 394.0,402.6 396.6,400.5 C399.2,398.4 400.7,392.9 404.4,390.1 C408.1,387.3 413.4,384.2 417.4,384.9 C421.4,385.6 422.8,389.6 426.5,394.0 C430.2,398.4 434.9,406.4 438.2,409.6 C441.5,412.8 442.1,411.7 444.7,411.7 C447.3,411.7 449.5,408.8 452.5,409.6 C455.5,410.4 456.7,410.0 461.6,416.1 C466.5,422.2 474.9,437.5 479.8,443.4 C484.7,449.3 486.1,448.7 488.9,449.1 C491.7,449.5 490.5,452.1 495.4,445.5 C500.3,438.9 509.6,419.8 516.2,412.2 C522.8,404.6 527.1,404.0 531.8,403.1 C536.5,402.2 538.5,403.7 542.2,407.0 C545.9,410.3 548.9,417.6 552.6,421.3 C556.3,425.0 559.3,424.3 563.0,427.8 C566.7,431.3 569.7,438.0 573.4,440.8 C577.1,443.6 581.0,442.2 583.8,443.4 C586.6,444.6 584.8,445.4 589.0,447.3 C593.2,449.2 602.5,455.2 607.2,453.8 C611.9,452.4 612.7,442.3 615.0,439.5 C617.3,436.7 617.5,440.3 620.2,438.2 C622.9,436.1 625.4,434.4 630.0,427.8 C634.6,421.2 640.9,408.8 645.6,401.8 C650.3,394.8 651.8,390.2 656.0,388.8 C660.2,387.4 663.9,394.7 669.0,394.0 C674.1,393.3 679.5,386.7 684.6,384.9 C689.7,383.1 691.5,384.1 697.6,384.1 C703.7,384.1 710.9,383.8 718.4,384.9 C725.9,386.0 733.1,390.2 739.2,390.1 C745.3,390.0 748.0,385.4 752.2,384.1 C756.4,382.8 758.4,382.5 762.6,383.1 C766.8,383.7 771.9,384.6 775.6,387.5 C779.3,390.4 780.1,390.5 783.4,399.2 C786.7,407.9 790.5,428.1 793.8,435.6 C797.1,443.1 798.3,441.5 801.6,440.8 C804.9,440.1 807.8,435.9 812.0,431.7 C816.2,427.5 819.9,424.2 825.0,417.4 C830.1,410.6 835.0,399.9 840.6,394.0 C846.2,388.1 851.1,386.5 856.2,384.9 C861.3,383.3 865.9,385.0 869.2,384.9 C872.5,384.8 869.7,381.5 874.4,384.1 C879.1,386.7 891.5,396.5 895.2,399.2" fill="none" stroke="#40d8e0" stroke-width="1.05" /><rect x="915" y="381" width="51" height="76" fill="#00065a" /><line x1="965.5" y1="381" x2="965.5" y2="457" stroke="#1c2ca8" stroke-width="1" /><line x1="915" y1="456.5" x2="966" y2="456.5" stroke="#1c2ca8" stroke-width="1" /><line x1="915.5" y1="381" x2="915.5" y2="457" stroke="#e8dca0" stroke-width="1" /><line x1="915" y1="381.5" x2="966" y2="381.5" stroke="#e8dca0" stroke-width="1" /><path d="M912,383.5 h3 M912,387.5 h3 M912,392.5 h3 M912,396.5 h3 M912,401.5 h3 M912,405.5 h3 M912,410.5 h3 M912,414.5 h3 M912,419.5 h3 M912,423.5 h3 M912,428.5 h3 M912,432.5 h3 M912,437.5 h3 M912,441.5 h3 M912,446.5 h3 M912,450.5 h3 M912,455.5 h3" stroke="#e8e4c0" stroke-width="1"/><text xml:space="preserve" x="964" y="390.3" font-size="12" fill="#eeeac0" text-anchor="end" font-weight="normal" font-family="Liberation Sans" textLength="45" lengthAdjust="spacingAndGlyphs" >100,0000</text><rect x="916" y="392.5" width="41.5" height="12" fill="#30e8f8" /><text xml:space="preserve" x="917" y="403.6" font-size="12" fill="#002030" text-anchor="start" font-weight="normal" font-family="Liberation Sans" textLength="38" lengthAdjust="spacingAndGlyphs" >76,2886</text><text xml:space="preserve" x="964" y="421.5" font-size="12" fill="#eeeac0" text-anchor="end" font-weight="normal" font-family="Liberation Sans" textLength="39" lengthAdjust="spacingAndGlyphs" >50,0000</text><text xml:space="preserve" x="964" y="453.8" font-size="12" fill="#eeeac0" text-anchor="end" font-weight="normal" font-family="Liberation Sans" >0</text><rect x="73" y="457" width="842" height="4" fill="#000" /><rect x="74" y="458" width="841" height="1" fill="#f0f0f0" /><rect x="74" y="460" width="841" height="1" fill="#f0f0d8" /><rect x="111" y="457" width="2" height="3" fill="#f4f4f4" /><rect x="174" y="457" width="2" height="3" fill="#f4f4f4" /><rect x="237" y="457" width="2" height="3" fill="#f4f4f4" /><rect x="300" y="457" width="2" height="3" fill="#f4f4f4" /><rect x="363" y="457" width="2" height="3" fill="#f4f4f4" /><rect x="426" y="457" width="2" height="3" fill="#f4f4f4" /><rect x="489" y="457" width="2" height="3" fill="#f4f4f4" /><rect x="552" y="457" width="2" height="3" fill="#f4f4f4" /><rect x="615" y="457" width="2" height="3" fill="#f4f4f4" /><rect x="678" y="457" width="2" height="3" fill="#f4f4f4" /><rect x="741" y="457" width="2" height="3" fill="#f4f4f4" /><rect x="804" y="457" width="2" height="3" fill="#f4f4f4" /><rect x="867" y="457" width="2" height="3" fill="#f4f4f4" /><rect x="74" y="461" width="841" height="16.5" fill="#00004c" /><line x1="74.5" y1="458" x2="74.5" y2="477" stroke="#f4f4f4" stroke-width="1" /><text xml:space="preserve" x="75.7" y="472.7" font-size="12.5" fill="#eeeac0" text-anchor="start" font-weight="normal" font-family="Liberation Sans" textLength="21" lengthAdjust="spacingAndGlyphs" >Dez</text><text xml:space="preserve" x="111" y="472.7" font-size="12.5" fill="#eeeac0" text-anchor="middle" font-weight="normal" font-family="Liberation Sans" textLength="13.5" lengthAdjust="spacingAndGlyphs" >05</text><text xml:space="preserve" x="174" y="472.7" font-size="12.5" fill="#eeeac0" text-anchor="middle" font-weight="normal" font-family="Liberation Sans" textLength="13.5" lengthAdjust="spacingAndGlyphs" >06</text><text xml:space="preserve" x="237" y="472.7" font-size="12.5" fill="#eeeac0" text-anchor="middle" font-weight="normal" font-family="Liberation Sans" textLength="13.5" lengthAdjust="spacingAndGlyphs" >07</text><text xml:space="preserve" x="300" y="472.7" font-size="12.5" fill="#eeeac0" text-anchor="middle" font-weight="normal" font-family="Liberation Sans" textLength="13.5" lengthAdjust="spacingAndGlyphs" >08</text><text xml:space="preserve" x="363" y="472.7" font-size="12.5" fill="#eeeac0" text-anchor="middle" font-weight="normal" font-family="Liberation Sans" textLength="13.5" lengthAdjust="spacingAndGlyphs" >09</text><text xml:space="preserve" x="426" y="472.7" font-size="12.5" fill="#eeeac0" text-anchor="middle" font-weight="normal" font-family="Liberation Sans" textLength="13.5" lengthAdjust="spacingAndGlyphs" >12</text><text xml:space="preserve" x="489" y="472.7" font-size="12.5" fill="#eeeac0" text-anchor="middle" font-weight="normal" font-family="Liberation Sans" textLength="13.5" lengthAdjust="spacingAndGlyphs" >13</text><text xml:space="preserve" x="552" y="472.7" font-size="12.5" fill="#eeeac0" text-anchor="middle" font-weight="normal" font-family="Liberation Sans" textLength="13.5" lengthAdjust="spacingAndGlyphs" >14</text><text xml:space="preserve" x="615" y="472.7" font-size="12.5" fill="#eeeac0" text-anchor="middle" font-weight="normal" font-family="Liberation Sans" textLength="13.5" lengthAdjust="spacingAndGlyphs" >15</text><text xml:space="preserve" x="678" y="472.7" font-size="12.5" fill="#eeeac0" text-anchor="middle" font-weight="normal" font-family="Liberation Sans" textLength="13.5" lengthAdjust="spacingAndGlyphs" >16</text><text xml:space="preserve" x="741" y="472.7" font-size="12.5" fill="#eeeac0" text-anchor="middle" font-weight="normal" font-family="Liberation Sans" textLength="13.5" lengthAdjust="spacingAndGlyphs" >19</text><text xml:space="preserve" x="804" y="472.7" font-size="12.5" fill="#eeeac0" text-anchor="middle" font-weight="normal" font-family="Liberation Sans" textLength="13.5" lengthAdjust="spacingAndGlyphs" >20</text><text xml:space="preserve" x="867" y="472.7" font-size="12.5" fill="#eeeac0" text-anchor="middle" font-weight="normal" font-family="Liberation Sans" textLength="13.5" lengthAdjust="spacingAndGlyphs" >21</text><rect x="915" y="457" width="52" height="21" fill="#f0efe6" /><g transform="translate(933,461)"><line x1="0" y1="13" x2="12" y2="1" stroke="#111" stroke-width="1.2"/><path d="M8,4 L11.5,1 L13,5 L15,5.5 L14,9.5 L10,9 Z" fill="#1530d0" stroke="#0a1a80" stroke-width="0.6"/></g><rect x="73" y="477.5" width="894" height="17.5" fill="#ececec" /><rect x="73" y="495" width="894" height="1" fill="#ffffff" /><rect x="74" y="478" width="16" height="17" fill="#efefef" /><line x1="89.5" y1="479" x2="89.5" y2="494" stroke="#c8c8c8" stroke-width="1" /><rect x="90" y="478" width="16" height="17" fill="#efefef" /><line x1="105.5" y1="479" x2="105.5" y2="494" stroke="#c8c8c8" stroke-width="1" /><rect x="106" y="478" width="16" height="17" fill="#efefef" /><line x1="121.5" y1="479" x2="121.5" y2="494" stroke="#c8c8c8" stroke-width="1" /><rect x="122" y="478" width="16" height="17" fill="#efefef" /><line x1="137.5" y1="479" x2="137.5" y2="494" stroke="#c8c8c8" stroke-width="1" /><rect x="74" y="494" width="64" height="1" fill="#a0a0a0" /><rect x="77" y="481.5" width="1.5" height="10" fill="#a8a8a8"/><path d="M85,481.5 L79,486.5 L85,491.5 Z" fill="#a8a8a8"/><path d="M101,481.5 L95,486.5 L101,491.5 Z" fill="#a8a8a8"/><path d="M111,481.5 L117,486.5 L111,491.5 Z" fill="#a8a8a8"/><path d="M126,481.5 L132,486.5 L126,491.5 Z" fill="#a8a8a8"/><rect x="133" y="481.5" width="1.5" height="10" fill="#a8a8a8"/><path d="M138,478 L146.5,494.7 L193.5,494.7 L202.5,478" fill="#ffffff" stroke="#333" stroke-width="1"/><text xml:space="preserve" x="152.5" y="489.8" font-size="13" fill="#111" text-anchor="start" font-weight="bold" font-family="Liberation Sans" textLength="36.5" lengthAdjust="spacingAndGlyphs" >Blatt1</text><line x1="205" y1="478" x2="205" y2="494" stroke="#666" stroke-width="1" /><path d="M215.5,482.5 L212,486 L215.5,489.5 Z" fill="#444"/><rect x="782.5" y="479.5" width="166" height="14" rx="2" fill="url(#scrollg)" stroke="#a0a0a0"/><path d="M862,483 v7 M864.5,483 v7 M867,483 v7" stroke="#555" stroke-width="1.2"/><path d="M957,482.5 L960.5,486 L957,489.5 Z" fill="#444"/></svg>
</body></html>
